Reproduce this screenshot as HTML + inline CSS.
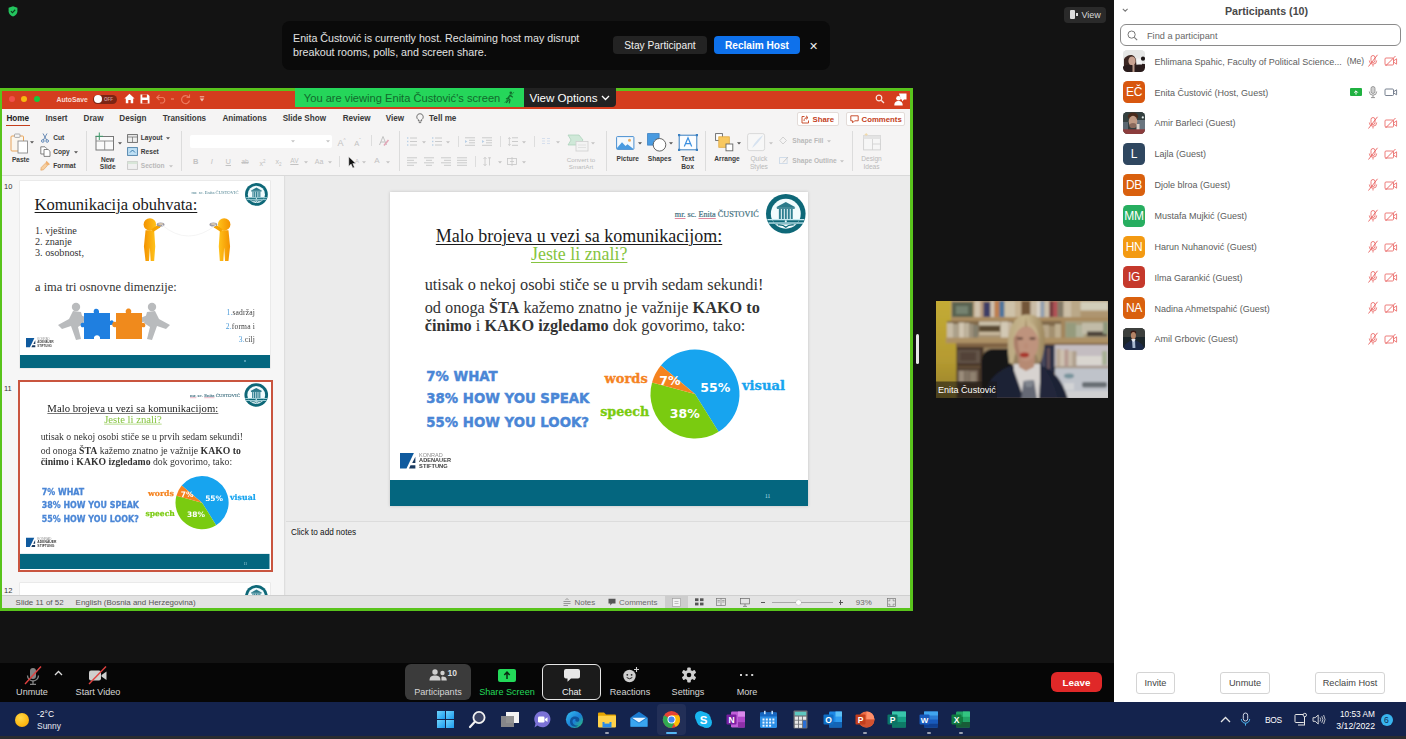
<!DOCTYPE html>
<html lang="bs">
<head>
<meta charset="utf-8">
<title>Zoom Meeting</title>
<style>
*{box-sizing:border-box;margin:0;padding:0}
html,body{width:1406px;height:739px;overflow:hidden;background:#121212;font-family:"Liberation Sans",sans-serif}
.a{position:absolute;white-space:nowrap}
#root{position:relative;width:1406px;height:739px;overflow:hidden;background:#131313}
svg{position:absolute;overflow:visible}
/* zoom chrome */
#ztool{left:0;top:663px;width:1114px;height:40px;background:#060606}
#taskbar{left:0;top:702px;width:1406px;height:34px;background:#14234d}
#under{left:0;top:736px;width:1406px;height:3px;background:#2a2c30}
#panel{left:1114px;top:0;width:292px;height:702px;background:#fff}
.zt{color:#d6d6d6;font-size:9.1px;top:686.2px;text-align:center;line-height:12px}
.tb{color:#fff;font-size:10px}
/* banner */
#banner{left:282px;top:21px;width:548px;height:49px;background:#0a0a0a;border-radius:8px}
/* panel */
.pn{font-size:9px;color:#5c5c5c;left:1154.6px}
.av{left:1123px;width:22px;height:22px;border-radius:4.5px;color:#fff;font-size:12px;text-align:center;line-height:22.5px;letter-spacing:-0.3px}
.pbtn{top:672.4px;height:22px;border:1px solid #d4d4d4;border-radius:3px;font-size:9.2px;color:#444;text-align:center;line-height:20px;background:#fff}

.tab{font-size:8.15px;font-weight:bold;line-height:11px}
.sq{text-decoration:underline;text-decoration-color:#e08aa0;text-decoration-thickness:0.8px;text-underline-offset:1px}
.sb{top:597.5px;font-size:7.95px;line-height:9px;color:#555}
</style>
</head>
<body>
<div id="root">
<!-- ============ ZOOM MAIN ============ -->
<!-- shield -->
<svg style="left:7.8px;top:6.2px" width="10" height="10.6" viewBox="0 0 12 13"><path d="M6 0.3 L11.4 2.2 V6.4 C11.4 9.6 9 11.8 6 12.8 C3 11.8 0.6 9.6 0.6 6.4 V2.2 Z" fill="#23c55e"/><path d="M3.4 6.4 L5.3 8.3 L8.7 4.6" fill="none" stroke="#0b3d1c" stroke-width="1.4"/></svg>
<!-- view button -->
<div class="a" style="left:1064px;top:7px;width:42px;height:16px;background:#2a2a2a;border-radius:4px"></div>
<div class="a" style="left:1070px;top:10px;width:5px;height:9px;background:#ddd;border-radius:1px"></div>
<div class="a" style="left:1076px;top:13px;width:2px;height:3px;background:#ddd"></div>
<div class="a" style="left:1081.5px;top:9px;font-size:9px;color:#d8d8d8;line-height:12px">View</div>
<!-- banner -->
<div id="banner" class="a"></div>
<div class="a" id="bt1" style="left:293px;top:31px;font-size:10.7px;line-height:14.4px;color:#e2e2e2;white-space:normal;width:320px">Enita Čustović is currently host. Reclaiming host may disrupt breakout rooms, polls, and screen share.</div>
<div class="a" style="left:613px;top:36px;width:94px;height:18px;background:#232323;border-radius:4px;color:#f0f0f0;font-size:10.2px;text-align:center;line-height:19.5px">Stay Participant</div>
<div class="a" style="left:714px;top:36px;width:86px;height:18px;background:#0e71eb;border-radius:4px;color:#fff;font-size:10.1px;font-weight:bold;text-align:center;line-height:19.5px">Reclaim Host</div>
<div class="a" style="left:808.5px;top:38.5px;font-size:10.5px;color:#eee;line-height:14px">✕</div>

<!-- toolbar -->
<div id="ztool" class="a"></div>
<!-- unmute -->
<svg style="left:22px;top:665px" width="22" height="22" viewBox="0 0 22 22"><rect x="8" y="3" width="6" height="11" rx="3" fill="#858585"/><path d="M5.5 10.5 A5.5 5.5 0 0 0 16.5 10.5" fill="none" stroke="#858585" stroke-width="1.3"/><path d="M11 16 V19 M8 19.3 H14" stroke="#858585" stroke-width="1.3"/><path d="M3 19 L19 1.5" stroke="#e0403f" stroke-width="1.4"/></svg>
<svg style="left:54px;top:670px" width="9" height="6" viewBox="0 0 9 6"><path d="M1 5 L4.5 1.5 L8 5" fill="none" stroke="#ddd" stroke-width="1.3"/></svg>
<div class="a zt" style="left:0;width:64px">Unmute</div>
<!-- start video -->
<svg style="left:86px;top:665px" width="24" height="22" viewBox="0 0 24 22"><rect x="3" y="5.5" width="12" height="10" rx="2" fill="#cfcfcf"/><path d="M15.5 10 L20.5 6.5 V15 L15.5 11.5 Z" fill="#cfcfcf"/><path d="M3 19 L20 1.5" stroke="#e0403f" stroke-width="1.4"/></svg>
<div class="a zt" style="left:66px;width:64px">Start Video</div>
<!-- participants -->
<div class="a" style="left:405px;top:664px;width:66px;height:36px;background:#3b3b3b;border-radius:6px"></div>
<svg style="left:428px;top:668px" width="32" height="16" viewBox="0 0 32 16"><circle cx="7" cy="4" r="2.7" fill="#cfcfcf"/><path d="M1.5 12.5 C1.5 8.5 4 7.6 7 7.6 C10 7.6 12.5 8.5 12.5 12.5 Z" fill="#cfcfcf"/><circle cx="14.5" cy="5" r="2.2" fill="#cfcfcf"/><path d="M13.5 12.5 C13.5 9.5 13 8.8 14.5 8.6 C17 8.6 18.8 9.6 18.8 12.5 Z" fill="#cfcfcf"/><text x="19.5" y="7.5" font-family="Liberation Sans, sans-serif" font-size="8.5" font-weight="bold" fill="#ddd">10</text></svg>
<div class="a zt" style="left:405px;width:66px">Participants</div>
<!-- share screen -->
<div class="a" style="left:498px;top:669px;width:18px;height:13px;background:#23d959;border-radius:2px"></div>
<svg style="left:502px;top:671px" width="10" height="9" viewBox="0 0 10 9"><path d="M5 8 V1.5 M2.3 4 L5 1.2 L7.7 4" fill="none" stroke="#0a2a12" stroke-width="1.5"/></svg>
<div class="a zt" style="left:474px;width:66px;color:#23d959">Share Screen</div>
<!-- chat -->
<div class="a" style="left:542px;top:664px;width:59px;height:36px;background:#1b1b1b;border:1px solid #e6e6e6;border-radius:6px"></div>
<svg style="left:563px;top:668px" width="18" height="16" viewBox="0 0 18 16"><path d="M3 1 H15 A2 2 0 0 1 17 3 V8.5 A2 2 0 0 1 15 10.5 H8 L4.5 13.8 V10.5 H3 A2 2 0 0 1 1 8.5 V3 A2 2 0 0 1 3 1 Z" fill="#e8e8e8"/></svg>
<div class="a zt" style="left:542px;width:59px;color:#f0f0f0">Chat</div>
<!-- reactions -->
<svg style="left:621px;top:666px" width="20" height="18" viewBox="0 0 20 18"><circle cx="8.5" cy="10" r="6.2" fill="#cfcfcf"/><circle cx="6.3" cy="8.8" r="0.9" fill="#222"/><circle cx="10.6" cy="8.8" r="0.9" fill="#222"/><path d="M5.7 11.5 Q8.5 14 11.3 11.5" fill="none" stroke="#222" stroke-width="1"/><path d="M15.5 1 V6 M13 3.5 H18" stroke="#cfcfcf" stroke-width="1.1"/></svg>
<div class="a zt" style="left:600px;width:60px">Reactions</div>
<!-- settings -->
<svg style="left:681px;top:667px" width="16" height="16" viewBox="0 0 16 16"><g fill="#cfcfcf"><circle cx="8" cy="8" r="5.2"/><g id="gt"><rect x="6.2" y="0.6" width="3.6" height="3.2" rx="1"/><rect x="6.2" y="12.2" width="3.6" height="3.2" rx="1"/></g><use href="#gt" transform="rotate(60 8 8)"/><use href="#gt" transform="rotate(120 8 8)"/></g><circle cx="8" cy="8" r="2.3" fill="#060606"/></svg>
<div class="a zt" style="left:658px;width:60px">Settings</div>
<!-- more -->
<div class="a" style="left:740px;top:674px;width:2.4px;height:2.4px;background:#cfcfcf;box-shadow:5.6px 0 #cfcfcf,11.2px 0 #cfcfcf"></div>
<div class="a zt" style="left:717px;width:60px">More</div>
<!-- leave -->
<div class="a" style="left:1051px;top:672px;width:51px;height:20px;background:#e02828;border-radius:6px;color:#fff;font-size:9.9px;font-weight:bold;text-align:center;line-height:21px">Leave</div>
<!-- ============ PANEL ============ -->
<div id="panel" class="a"></div>
<svg style="left:1122px;top:7.6px" width="6.4" height="4" viewBox="0 0 8 5"><path d="M1 1 L4 4 L7 1" fill="none" stroke="#777" stroke-width="1.3"/></svg>
<div class="a" style="left:1114px;top:4px;width:292px;text-align:center;padding-left:13px;font-size:10.7px;font-weight:bold;color:#484848;line-height:14px">Participants (10)</div>
<div class="a" style="left:1120px;top:24px;width:281px;height:22px;border:1px solid #8a8a8a;border-radius:6px;background:#fff"></div>
<svg style="left:1127px;top:30px" width="11" height="11" viewBox="0 0 11 11"><circle cx="4.6" cy="4.6" r="3.6" fill="none" stroke="#777" stroke-width="1"/><path d="M7.3 7.3 L10.2 10.2" stroke="#777" stroke-width="1.1"/></svg>
<div class="a" style="left:1147px;top:30px;font-size:9.2px;color:#666;line-height:12px">Find a participant</div>
<svg style="left:1123px;top:50.4px;border-radius:4.5px;overflow:hidden" width="22" height="22" viewBox="0 0 22 22"><defs><filter id="ab1"><feGaussianBlur stdDeviation="0.7"/></filter></defs><rect width="22" height="22" fill="#e6e6e5"/><g filter="url(#ab1)"><rect x="-2" y="-2" width="26" height="26" fill="#e6e7e6"/><path d="M1 24 L1 9 Q4 4.5 9 5 Q12 6 13 10 L14 24 Z" fill="#3a2620"/><ellipse cx="9" cy="11" rx="3.6" ry="4.6" fill="#c9a392"/><path d="M-1 24 V17 Q6 13 11 16 Q16 12.5 24 14.5 V24 Z" fill="#2a1c1e"/><rect x="9.5" y="15" width="2" height="8" fill="#b89888"/><rect x="14" y="8.5" width="5" height="6" fill="#f3f3f3"/><circle cx="20" cy="8.7" r="2.1" fill="#1c1518"/></g></svg>
<div class="a pn" id="pn0" style="top:55.6px;line-height:13px">Ehlimana Spahic, Faculty of Political Science...</div>
<div class="a pn" style="left:1346.7px;top:54.9px;line-height:13px;font-size:8.5px">(Me)</div>
<svg style="left:1367px;top:54.4px" width="12" height="14" viewBox="0 0 12 14"><rect x="4" y="1.5" width="4" height="7" rx="2" fill="none" stroke="#e85e5c" stroke-width="0.8"/><path d="M2.3 6.5 A3.7 3.7 0 0 0 9.7 6.5 M6 10.3 V12.5" fill="none" stroke="#e85e5c" stroke-width="0.8"/><path d="M1.5 12.5 L10.5 0.8" stroke="#e85e5c" stroke-width="0.9"/></svg>
<svg style="left:1384px;top:55.4px" width="14" height="12" viewBox="0 0 14 12"><rect x="1" y="3" width="8.5" height="7" rx="1" fill="none" stroke="#e85e5c" stroke-width="0.8"/><path d="M9.8 5.8 L12.6 3.8 V9.2 L9.8 7.2" fill="none" stroke="#e85e5c" stroke-width="0.8"/><path d="M1.5 11 L11.5 1" stroke="#e85e5c" stroke-width="0.9"/></svg>
<div class="a av" style="top:81.3px;background:#d8570f">EČ</div>
<div class="a pn" id="pn1" style="top:86.5px;line-height:13px">Enita Čustović (Host, Guest)</div>
<div class="a" style="left:1350px;top:88.3px;width:12px;height:8px;background:#1fb141;border-radius:1px"></div>
<svg style="left:1353px;top:89.8px" width="6" height="5" viewBox="0 0 6 5"><path d="M3 4.6 V1 M1.2 2.6 L3 0.8 L4.8 2.6" fill="none" stroke="#fff" stroke-width="1"/></svg>
<svg style="left:1367px;top:85.3px" width="12" height="14" viewBox="0 0 12 14"><rect x="4" y="1.5" width="4" height="7" rx="2" fill="#d0d0d0" stroke="#8a8a8a" stroke-width="0.8"/><path d="M2.3 6.5 A3.7 3.7 0 0 0 9.7 6.5 M6 10.3 V12.5 M4 12.6 H8" fill="none" stroke="#8a8a8a" stroke-width="0.9"/></svg>
<svg style="left:1384px;top:86.3px" width="14" height="12" viewBox="0 0 14 12"><rect x="1" y="3" width="8.5" height="6.5" rx="1" fill="none" stroke="#6a7485" stroke-width="0.9"/><path d="M9.8 5.6 L12.6 3.8 V8.8 L9.8 7" fill="none" stroke="#6a7485" stroke-width="0.9"/></svg>
<svg style="left:1123px;top:112.1px;border-radius:4.5px;overflow:hidden" width="22" height="22" viewBox="0 0 22 22"><defs><filter id="ab2"><feGaussianBlur stdDeviation="0.7"/></filter></defs><rect width="22" height="22" fill="#3a4646"/><g filter="url(#ab2)"><rect x="-2" y="-2" width="26" height="26" fill="#34403f"/><rect x="14" y="8" width="10" height="10" fill="#6a7680"/><rect x="-2" y="10" width="7" height="8" fill="#5a6670"/><ellipse cx="10" cy="4.5" rx="5.2" ry="4" fill="#4a2c1c"/><ellipse cx="10" cy="9.5" rx="4.3" ry="5.8" fill="#c09a84"/><ellipse cx="10" cy="13.5" rx="3.6" ry="2.6" fill="#8a6a5c"/><rect x="13.5" y="12" width="3" height="7" fill="#d8d0c8"/><rect x="-2" y="17.3" width="26" height="7" fill="#8c3c3e"/><circle cx="19.8" cy="5.4" r="1.1" fill="#e8f0f0"/></g></svg>
<div class="a pn" id="pn2" style="top:117.3px;line-height:13px">Amir Barleci (Guest)</div>
<svg style="left:1367px;top:116.1px" width="12" height="14" viewBox="0 0 12 14"><rect x="4" y="1.5" width="4" height="7" rx="2" fill="none" stroke="#e85e5c" stroke-width="0.8"/><path d="M2.3 6.5 A3.7 3.7 0 0 0 9.7 6.5 M6 10.3 V12.5" fill="none" stroke="#e85e5c" stroke-width="0.8"/><path d="M1.5 12.5 L10.5 0.8" stroke="#e85e5c" stroke-width="0.9"/></svg>
<svg style="left:1384px;top:117.1px" width="14" height="12" viewBox="0 0 14 12"><rect x="1" y="3" width="8.5" height="7" rx="1" fill="none" stroke="#e85e5c" stroke-width="0.8"/><path d="M9.8 5.8 L12.6 3.8 V9.2 L9.8 7.2" fill="none" stroke="#e85e5c" stroke-width="0.8"/><path d="M1.5 11 L11.5 1" stroke="#e85e5c" stroke-width="0.9"/></svg>
<div class="a av" style="top:143.0px;background:#2f4760">L</div>
<div class="a pn" id="pn3" style="top:148.2px;line-height:13px">Lajla (Guest)</div>
<svg style="left:1367px;top:147.0px" width="12" height="14" viewBox="0 0 12 14"><rect x="4" y="1.5" width="4" height="7" rx="2" fill="none" stroke="#e85e5c" stroke-width="0.8"/><path d="M2.3 6.5 A3.7 3.7 0 0 0 9.7 6.5 M6 10.3 V12.5" fill="none" stroke="#e85e5c" stroke-width="0.8"/><path d="M1.5 12.5 L10.5 0.8" stroke="#e85e5c" stroke-width="0.9"/></svg>
<svg style="left:1384px;top:148.0px" width="14" height="12" viewBox="0 0 14 12"><rect x="1" y="3" width="8.5" height="7" rx="1" fill="none" stroke="#e85e5c" stroke-width="0.8"/><path d="M9.8 5.8 L12.6 3.8 V9.2 L9.8 7.2" fill="none" stroke="#e85e5c" stroke-width="0.8"/><path d="M1.5 11 L11.5 1" stroke="#e85e5c" stroke-width="0.9"/></svg>
<div class="a av" style="top:173.8px;background:#d9600e">DB</div>
<div class="a pn" id="pn4" style="top:179.0px;line-height:13px">Djole blroa (Guest)</div>
<svg style="left:1367px;top:177.8px" width="12" height="14" viewBox="0 0 12 14"><rect x="4" y="1.5" width="4" height="7" rx="2" fill="none" stroke="#e85e5c" stroke-width="0.8"/><path d="M2.3 6.5 A3.7 3.7 0 0 0 9.7 6.5 M6 10.3 V12.5" fill="none" stroke="#e85e5c" stroke-width="0.8"/><path d="M1.5 12.5 L10.5 0.8" stroke="#e85e5c" stroke-width="0.9"/></svg>
<svg style="left:1384px;top:178.8px" width="14" height="12" viewBox="0 0 14 12"><rect x="1" y="3" width="8.5" height="7" rx="1" fill="none" stroke="#e85e5c" stroke-width="0.8"/><path d="M9.8 5.8 L12.6 3.8 V9.2 L9.8 7.2" fill="none" stroke="#e85e5c" stroke-width="0.8"/><path d="M1.5 11 L11.5 1" stroke="#e85e5c" stroke-width="0.9"/></svg>
<div class="a av" style="top:204.7px;background:#27ae60">MM</div>
<div class="a pn" id="pn5" style="top:209.9px;line-height:13px">Mustafa Mujkić (Guest)</div>
<svg style="left:1367px;top:208.7px" width="12" height="14" viewBox="0 0 12 14"><rect x="4" y="1.5" width="4" height="7" rx="2" fill="none" stroke="#e85e5c" stroke-width="0.8"/><path d="M2.3 6.5 A3.7 3.7 0 0 0 9.7 6.5 M6 10.3 V12.5" fill="none" stroke="#e85e5c" stroke-width="0.8"/><path d="M1.5 12.5 L10.5 0.8" stroke="#e85e5c" stroke-width="0.9"/></svg>
<svg style="left:1384px;top:209.7px" width="14" height="12" viewBox="0 0 14 12"><rect x="1" y="3" width="8.5" height="7" rx="1" fill="none" stroke="#e85e5c" stroke-width="0.8"/><path d="M9.8 5.8 L12.6 3.8 V9.2 L9.8 7.2" fill="none" stroke="#e85e5c" stroke-width="0.8"/><path d="M1.5 11 L11.5 1" stroke="#e85e5c" stroke-width="0.9"/></svg>
<div class="a av" style="top:235.6px;background:#f39a12">HN</div>
<div class="a pn" id="pn6" style="top:240.8px;line-height:13px">Harun Nuhanović (Guest)</div>
<svg style="left:1367px;top:239.6px" width="12" height="14" viewBox="0 0 12 14"><rect x="4" y="1.5" width="4" height="7" rx="2" fill="none" stroke="#e85e5c" stroke-width="0.8"/><path d="M2.3 6.5 A3.7 3.7 0 0 0 9.7 6.5 M6 10.3 V12.5" fill="none" stroke="#e85e5c" stroke-width="0.8"/><path d="M1.5 12.5 L10.5 0.8" stroke="#e85e5c" stroke-width="0.9"/></svg>
<svg style="left:1384px;top:240.6px" width="14" height="12" viewBox="0 0 14 12"><rect x="1" y="3" width="8.5" height="7" rx="1" fill="none" stroke="#e85e5c" stroke-width="0.8"/><path d="M9.8 5.8 L12.6 3.8 V9.2 L9.8 7.2" fill="none" stroke="#e85e5c" stroke-width="0.8"/><path d="M1.5 11 L11.5 1" stroke="#e85e5c" stroke-width="0.9"/></svg>
<div class="a av" style="top:266.4px;background:#c5392c">IG</div>
<div class="a pn" id="pn7" style="top:271.6px;line-height:13px">Ilma Garankić (Guest)</div>
<svg style="left:1367px;top:270.4px" width="12" height="14" viewBox="0 0 12 14"><rect x="4" y="1.5" width="4" height="7" rx="2" fill="none" stroke="#e85e5c" stroke-width="0.8"/><path d="M2.3 6.5 A3.7 3.7 0 0 0 9.7 6.5 M6 10.3 V12.5" fill="none" stroke="#e85e5c" stroke-width="0.8"/><path d="M1.5 12.5 L10.5 0.8" stroke="#e85e5c" stroke-width="0.9"/></svg>
<svg style="left:1384px;top:271.4px" width="14" height="12" viewBox="0 0 14 12"><rect x="1" y="3" width="8.5" height="7" rx="1" fill="none" stroke="#e85e5c" stroke-width="0.8"/><path d="M9.8 5.8 L12.6 3.8 V9.2 L9.8 7.2" fill="none" stroke="#e85e5c" stroke-width="0.8"/><path d="M1.5 11 L11.5 1" stroke="#e85e5c" stroke-width="0.9"/></svg>
<div class="a av" style="top:297.3px;background:#d9600e">NA</div>
<div class="a pn" id="pn8" style="top:302.5px;line-height:13px">Nadina Ahmetspahić (Guest)</div>
<svg style="left:1367px;top:301.3px" width="12" height="14" viewBox="0 0 12 14"><rect x="4" y="1.5" width="4" height="7" rx="2" fill="none" stroke="#e85e5c" stroke-width="0.8"/><path d="M2.3 6.5 A3.7 3.7 0 0 0 9.7 6.5 M6 10.3 V12.5" fill="none" stroke="#e85e5c" stroke-width="0.8"/><path d="M1.5 12.5 L10.5 0.8" stroke="#e85e5c" stroke-width="0.9"/></svg>
<svg style="left:1384px;top:302.3px" width="14" height="12" viewBox="0 0 14 12"><rect x="1" y="3" width="8.5" height="7" rx="1" fill="none" stroke="#e85e5c" stroke-width="0.8"/><path d="M9.8 5.8 L12.6 3.8 V9.2 L9.8 7.2" fill="none" stroke="#e85e5c" stroke-width="0.8"/><path d="M1.5 11 L11.5 1" stroke="#e85e5c" stroke-width="0.9"/></svg>
<svg style="left:1123px;top:328.1px;border-radius:4.5px;overflow:hidden" width="22" height="22" viewBox="0 0 22 22"><defs><filter id="ab3"><feGaussianBlur stdDeviation="0.7"/></filter></defs><rect width="22" height="22" fill="#2c3236"/><g filter="url(#ab3)"><rect x="-2" y="-2" width="26" height="12" fill="#3c3f3e"/><rect x="-2" y="9" width="26" height="15" fill="#1e252c"/><path d="M-1 24 Q2 13 10.5 12 Q19 13 23 24 Z" fill="#1c2c4a"/><ellipse cx="10.4" cy="4.6" rx="2.8" ry="2" fill="#3a1c12"/><ellipse cx="10.4" cy="7.6" rx="2.5" ry="3.6" fill="#b48466"/><path d="M9 11.5 H12 L12.4 20 H9.6 Z" fill="#a8b8d0"/><path d="M8.2 11.8 L10.4 14 L12.6 11.8 L12 11 H8.8 Z" fill="#e4e8f0"/></g></svg>
<div class="a pn" id="pn9" style="top:333.3px;line-height:13px">Amil Grbovic (Guest)</div>
<svg style="left:1367px;top:332.1px" width="12" height="14" viewBox="0 0 12 14"><rect x="4" y="1.5" width="4" height="7" rx="2" fill="none" stroke="#e85e5c" stroke-width="0.8"/><path d="M2.3 6.5 A3.7 3.7 0 0 0 9.7 6.5 M6 10.3 V12.5" fill="none" stroke="#e85e5c" stroke-width="0.8"/><path d="M1.5 12.5 L10.5 0.8" stroke="#e85e5c" stroke-width="0.9"/></svg>
<svg style="left:1384px;top:333.1px" width="14" height="12" viewBox="0 0 14 12"><rect x="1" y="3" width="8.5" height="7" rx="1" fill="none" stroke="#e85e5c" stroke-width="0.8"/><path d="M9.8 5.8 L12.6 3.8 V9.2 L9.8 7.2" fill="none" stroke="#e85e5c" stroke-width="0.8"/><path d="M1.5 11 L11.5 1" stroke="#e85e5c" stroke-width="0.9"/></svg>
<div class="a pbtn" style="left:1136px;width:39px">Invite</div>
<div class="a pbtn" style="left:1220px;width:50px">Unmute</div>
<div class="a pbtn" style="left:1315px;width:70px">Reclaim Host</div>
<!-- ============ SHARED SCREEN (PowerPoint) ============ -->
<svg width="0" height="0" style="left:0;top:0"><defs><filter id="fgb" x="-10%" y="-10%" width="120%" height="120%"><feGaussianBlur stdDeviation="0.45"/></filter></defs></svg>
<div class="a" style="left:0;top:88px;width:913px;height:522.5px;background:#59c41c"></div>
<div class="a" style="left:1.5px;top:91px;width:908.5px;height:517px;background:#e9e9e9;overflow:hidden"></div>
<div class="a" style="left:1.5px;top:91px;width:908.5px;height:18px;background:#d43d1e"></div>
<div class="a" style="left:8.5px;top:96px;width:6.4px;height:6.4px;border-radius:50%;background:#f14f4a"></div>
<div class="a" style="left:20.9px;top:96px;width:6.4px;height:6.4px;border-radius:50%;background:#f8b70f"></div>
<div class="a" style="left:33.5px;top:96px;width:6.4px;height:6.4px;border-radius:50%;background:#17c93c"></div>
<div class="a" style="left:56.5px;top:95px;font-size:6.8px;font-weight:bold;color:#f8d8d0;line-height:9px">AutoSave</div>
<div class="a" style="left:93px;top:94.5px;width:24px;height:9px;border-radius:4.5px;background:#7d2414"></div>
<div class="a" style="left:93.5px;top:95px;width:8px;height:8px;border-radius:50%;background:#fff"></div>
<div class="a" style="left:104px;top:96.5px;font-size:4.5px;color:#c99;line-height:5px;font-weight:bold">OFF</div>
<svg style="left:124px;top:93px" width="11" height="11" viewBox="0 0 11 11"><path d="M5.5 0.8 L10.6 5.6 H9.2 V10.2 H6.7 V7 H4.3 V10.2 H1.8 V5.6 H0.4 Z" fill="#fff"/></svg>
<svg style="left:140px;top:93.5px" width="10" height="10" viewBox="0 0 10 10"><path d="M0.5 0.5 H8 L9.5 2 V9.5 H0.5 Z" fill="#fff"/><rect x="2.3" y="0.5" width="4.6" height="3" fill="#d43d1e"/><rect x="2.3" y="6" width="5.4" height="3.5" fill="#d43d1e"/></svg>
<svg style="left:156px;top:94px" width="11" height="10" viewBox="0 0 11 10"><path d="M1 3.5 H7 A3 3 0 0 1 7 9 H4" fill="none" stroke="#ec7a5e" stroke-width="1.2"/><path d="M3.5 0.8 L0.8 3.5 L3.5 6.2" fill="none" stroke="#ec7a5e" stroke-width="1.2"/></svg>
<div class="a" style="left:171px;top:98px;width:3px;height:1.5px;background:#e0694c"></div>
<svg style="left:179.5px;top:93.5px" width="11" height="11" viewBox="0 0 11 11"><path d="M8.6 3 A4 4 0 1 0 9.5 6.5" fill="none" stroke="#ec7a5e" stroke-width="1.2"/><path d="M9.5 0.5 V3.5 H6.5" fill="none" stroke="#ec7a5e" stroke-width="1.1"/></svg>
<svg style="left:198.5px;top:96px" width="6" height="6" viewBox="0 0 6 6"><path d="M0.8 0.8 H5.2" stroke="#f3c0b2" stroke-width="1"/><path d="M0.8 2.6 H5.2 L3 5.4 Z" fill="#f3c0b2"/></svg>
<svg style="left:875px;top:94px" width="10" height="10" viewBox="0 0 10 10"><circle cx="4" cy="4" r="2.8" fill="none" stroke="#fbe3dc" stroke-width="1.2"/><path d="M6.2 6.2 L9 9" stroke="#fbe3dc" stroke-width="1.3"/></svg>
<svg style="left:894px;top:92.5px" width="13" height="13" viewBox="0 0 13 13"><path d="M5 0.5 H12.5 V6.5 H10 L8 8.5 V6.5 H7" fill="#fff"/><circle cx="4.5" cy="5.2" r="2.3" fill="#fff"/><path d="M0.3 12.5 C0.3 9 2.3 8 4.5 8 C6.7 8 8.7 9 8.7 12.5 Z" fill="#fff"/></svg>
<div class="a" style="left:295px;top:88px;width:229px;height:18.5px;background:#25d65a"></div>
<div class="a" id="yav" style="left:303.8px;top:90.5px;font-size:11.14px;line-height:14px;color:#116a2c">You are viewing Enita Čustović's screen</div>
<svg style="left:504px;top:91px" width="11" height="13" viewBox="0 0 11 13"><circle cx="6.8" cy="1.8" r="1.3" fill="#116a2c"/><path d="M6.5 3.5 L4 7 L6 9 L5.2 12.3 M4 7 L2 8 M6.2 4.5 L8.8 6.2 M4.5 8.8 L2.2 11.8" fill="none" stroke="#116a2c" stroke-width="1.2"/><path d="M0.5 12 L10 1" stroke="#116a2c" stroke-width="0.6"/></svg>
<div class="a" style="left:524px;top:88px;width:92px;height:18.5px;background:#222;border-radius:0 0 4px 0"></div>
<div class="a" id="vop" style="left:529.4px;top:90.5px;font-size:11.6px;line-height:14px;color:#fff">View Options</div>
<svg style="left:601px;top:95px" width="9" height="6" viewBox="0 0 9 6"><path d="M1 1 L4.5 4.5 L8 1" fill="none" stroke="#fff" stroke-width="1.3"/></svg>
<div class="a" style="left:1.5px;top:109px;width:908.5px;height:66.5px;background:#f5f4f4;border-bottom:1px solid #d9d9d9"></div>
<div class="a tab" id="tab0" style="left:6.4px;top:112.5px;color:#222">Home</div>
<div class="a tab" id="tab1" style="left:45.4px;top:112.5px;color:#3a3a3a">Insert</div>
<div class="a tab" id="tab2" style="left:83.6px;top:112.5px;color:#3a3a3a">Draw</div>
<div class="a tab" id="tab3" style="left:119.3px;top:112.5px;color:#3a3a3a">Design</div>
<div class="a tab" id="tab4" style="left:162.8px;top:112.5px;color:#3a3a3a">Transitions</div>
<div class="a tab" id="tab5" style="left:222.5px;top:112.5px;color:#3a3a3a">Animations</div>
<div class="a tab" id="tab6" style="left:282.7px;top:112.5px;color:#3a3a3a">Slide Show</div>
<div class="a tab" id="tab7" style="left:342.7px;top:112.5px;color:#3a3a3a">Review</div>
<div class="a tab" id="tab8" style="left:385.8px;top:112.5px;color:#3a3a3a">View</div>
<div class="a tab" id="tab9" style="left:429px;top:112.5px;color:#3a3a3a">Tell me</div>
<div class="a" style="left:6.4px;top:124.6px;width:23.6px;height:1.6px;background:#c43e1c"></div>
<svg style="left:415.5px;top:112.5px" width="8" height="11" viewBox="0 0 8 11"><path d="M4 0.7 A3.2 3.2 0 0 1 5.6 6.7 V8 H2.4 V6.7 A3.2 3.2 0 0 1 4 0.7 Z M2.8 9.6 H5.2" fill="none" stroke="#555" stroke-width="0.8"/></svg>
<div class="a" style="left:797px;top:112px;width:41.5px;height:14px;background:#fff;border:0.6px solid #e3dcd9;border-radius:2px"></div>
<svg style="left:801px;top:114.5px" width="9" height="9" viewBox="0 0 9 9"><path d="M3.5 1.5 H1 V8 H7.5 V5.5 M3 6 C3 3.5 4.5 2.6 6.5 2.6 M5 0.8 L7 2.6 L5 4.4" fill="none" stroke="#c43e1c" stroke-width="0.9"/></svg>
<div class="a tab" id="shr" style="left:812.5px;top:113.7px;color:#c43e1c;font-size:7.8px">Share</div>
<div class="a" style="left:846px;top:112px;width:58.5px;height:14px;background:#fff;border:0.6px solid #e3dcd9;border-radius:2px"></div>
<svg style="left:849.5px;top:115px" width="9" height="9" viewBox="0 0 9 9"><path d="M0.8 0.8 H8.2 V5.8 H4.6 L2.6 7.8 V5.8 H0.8 Z" fill="none" stroke="#c43e1c" stroke-width="0.9"/></svg>
<div class="a tab" id="cmt" style="left:861.5px;top:113.7px;color:#c43e1c;font-size:7.8px">Comments</div>
<svg style="left:9.6px;top:133px" width="19" height="21" viewBox="0 0 19 21"><rect x="1" y="3" width="12.5" height="15" rx="1" fill="#fbf6ee" stroke="#e8a45a" stroke-width="1"/><rect x="4.5" y="1" width="5.5" height="3.4" rx="0.8" fill="#f5f5f5" stroke="#999" stroke-width="0.8"/><rect x="8" y="8" width="9.5" height="12" fill="#fff" stroke="#8a8a8a" stroke-width="0.9"/></svg>
<svg style="left:30.4px;top:141.3px" width="4" height="3" viewBox="0 0 4 3"><path d="M0 0.3 L2 2.6 L4 0.3 Z" fill="#555"/></svg>
<div class="a" style="left:-9.3px;width:60px;text-align:center;top:155.6px;font-size:6.6px;line-height:8px;color:#3b3b3b;font-weight:bold">Paste</div>
<svg style="left:40.5px;top:133px" width="8" height="10" viewBox="0 0 8 10"><path d="M2 0.5 L5.6 7 M6 0.5 L2.4 7" stroke="#5a7fae" stroke-width="0.9"/><circle cx="1.8" cy="8" r="1.3" fill="none" stroke="#3d6ea8" stroke-width="0.8"/><circle cx="6.2" cy="8" r="1.3" fill="none" stroke="#3d6ea8" stroke-width="0.8"/></svg>
<div class="a" style="left:53.3px;top:133.8px;font-size:6.6px;line-height:8px;color:#3b3b3b;font-weight:bold">Cut</div>
<svg style="left:39.5px;top:146px" width="11" height="11" viewBox="0 0 11 11"><path d="M0.8 0.8 H5 L6.8 2.6 V8 H0.8 Z" fill="#fff" stroke="#666" stroke-width="0.8"/><path d="M4 3.5 H8.2 L10 5.3 V10.4 H4 Z" fill="#fff" stroke="#666" stroke-width="0.8"/></svg>
<div class="a" style="left:53.3px;top:147.7px;font-size:6.6px;line-height:8px;color:#3b3b3b;font-weight:bold">Copy</div>
<svg style="left:73.7px;top:150.7px" width="4" height="3" viewBox="0 0 4 3"><path d="M0 0.3 L2 2.6 L4 0.3 Z" fill="#555"/></svg>
<svg style="left:39.5px;top:160px" width="11" height="11" viewBox="0 0 11 11"><path d="M6.5 0.8 L10 4.3 L7.8 5.4 L5.4 3 Z" fill="#f0b070"/><path d="M5.2 3.4 L7.4 5.6 L3.5 9.8 L0.8 10.2 L1.2 7.5 Z" fill="#f7cfa0" stroke="#e09a50" stroke-width="0.6"/></svg>
<div class="a" style="left:53.3px;top:161.6px;font-size:6.6px;line-height:8px;color:#3b3b3b;font-weight:bold">Format</div>
<div class="a" style="left:86.4px;top:131px;width:1px;height:40px;background:#dcdcdc"></div>
<svg style="left:94px;top:131.5px" width="21" height="20" viewBox="0 0 21 20"><rect x="2" y="4.5" width="17.5" height="13.5" fill="#fafafa" stroke="#777" stroke-width="1"/><path d="M2 9 H19.5 M10.7 9 V18" stroke="#8a8a8a" stroke-width="0.9"/><path d="M5.3 0.5 V8 M1.5 4.3 H9" stroke="#3d9a6a" stroke-width="1"/></svg>
<svg style="left:118.0px;top:141.8px" width="4" height="3" viewBox="0 0 4 3"><path d="M0 0.3 L2 2.6 L4 0.3 Z" fill="#555"/></svg>
<div class="a" style="left:77.7px;width:60px;text-align:center;top:155.6px;font-size:6.6px;line-height:8px;color:#3b3b3b;font-weight:bold">New</div>
<div class="a" style="left:77.7px;width:60px;text-align:center;top:163.0px;font-size:6.6px;line-height:8px;color:#3b3b3b;font-weight:bold">Slide</div>
<svg style="left:126.5px;top:133.5px" width="11" height="9" viewBox="0 0 11 9"><rect x="0.6" y="0.6" width="9.8" height="7.8" fill="#eee" stroke="#666" stroke-width="0.9"/><path d="M0.6 3 H10.4 M5.5 3 V8.4" stroke="#777" stroke-width="0.8"/></svg>
<div class="a" style="left:140.8px;top:133.8px;font-size:6.6px;line-height:8px;color:#3b3b3b;font-weight:bold">Layout</div>
<svg style="left:166.0px;top:136.8px" width="4" height="3" viewBox="0 0 4 3"><path d="M0 0.3 L2 2.6 L4 0.3 Z" fill="#555"/></svg>
<svg style="left:126.5px;top:147px" width="11" height="9" viewBox="0 0 11 9"><rect x="0.6" y="0.6" width="9.8" height="7.8" fill="#bfe0f5" stroke="#4a7fa8" stroke-width="0.9"/><path d="M3 5.5 L5.5 3 L8 5.5" fill="none" stroke="#2d6fa0" stroke-width="0.9"/></svg>
<div class="a" style="left:140.8px;top:147.7px;font-size:6.6px;line-height:8px;color:#3b3b3b;font-weight:bold">Reset</div>
<svg style="left:126.5px;top:161px" width="11" height="9" viewBox="0 0 11 9"><rect x="0.6" y="0.6" width="9.8" height="7.8" fill="#f0f0f0" stroke="#c6c6c6" stroke-width="0.9"/><rect x="0.6" y="0.6" width="9.8" height="2.4" fill="#d8e6d8"/></svg>
<div class="a" style="left:140.8px;top:161.6px;font-size:6.6px;line-height:8px;color:#b9b9b9;font-weight:bold">Section</div>
<svg style="left:168.7px;top:164.6px" width="4" height="3" viewBox="0 0 4 3"><path d="M0 0.3 L2 2.6 L4 0.3 Z" fill="#c4c4c4"/></svg>
<div class="a" style="left:181.4px;top:131px;width:1px;height:40px;background:#dcdcdc"></div>
<div class="a" style="left:189.5px;top:135px;width:142.5px;height:13px;background:#fff;border-radius:2px"></div>
<svg style="left:290.7px;top:140.4px" width="4" height="3" viewBox="0 0 4 3"><path d="M0 0.3 L2 2.6 L4 0.3 Z" fill="#c4c4c4"/></svg>
<svg style="left:325.7px;top:140.4px" width="4" height="3" viewBox="0 0 4 3"><path d="M0 0.3 L2 2.6 L4 0.3 Z" fill="#c4c4c4"/></svg>
<div class="a" style="left:185.6px;width:20px;text-align:center;top:156.7px;font-size:7.5px;line-height:10px;color:#c2c2c2;font-weight:bold">B</div>
<div class="a" style="left:201.9px;width:20px;text-align:center;top:156.7px;font-size:7.5px;line-height:10px;color:#c2c2c2;font-style:italic">I</div>
<div class="a" style="left:218.3px;width:20px;text-align:center;top:156.7px;font-size:7.5px;line-height:10px;color:#c2c2c2;text-decoration:underline">U</div>
<div class="a" style="left:235.0px;width:20px;text-align:center;top:156.7px;font-size:6.5px;line-height:10px;color:#c2c2c2;text-decoration:line-through">ab</div>
<div class="a" style="left:252.4px;width:20px;text-align:center;top:156.7px;font-size:7px;line-height:10px;color:#c2c2c2;">x<sup style="font-size:4.5px">2</sup></div>
<div class="a" style="left:268.4px;width:20px;text-align:center;top:156.7px;font-size:7px;line-height:10px;color:#c2c2c2;">x<sub style="font-size:4.5px">2</sub></div>
<div class="a" style="left:284.4px;width:20px;text-align:center;top:156.2px;font-size:6.5px;line-height:10px;color:#c2c2c2;text-decoration:underline">AV</div>
<svg style="left:304.3px;top:160.8px" width="4" height="3" viewBox="0 0 4 3"><path d="M0 0.3 L2 2.6 L4 0.3 Z" fill="#c4c4c4"/></svg>
<div class="a" style="left:309.0px;width:20px;text-align:center;top:156.7px;font-size:7px;line-height:10px;color:#c2c2c2;">Aa</div>
<svg style="left:328.0px;top:160.8px" width="4" height="3" viewBox="0 0 4 3"><path d="M0 0.3 L2 2.6 L4 0.3 Z" fill="#c4c4c4"/></svg>
<div class="a" style="left:331.6px;width:20px;text-align:center;top:136.0px;font-size:9px;line-height:10px;color:#c2c2c2;">A<sup style="font-size:4.5px">^</sup></div>
<div class="a" style="left:347.6px;width:20px;text-align:center;top:136.0px;font-size:7.5px;line-height:10px;color:#c2c2c2;">A<sup style="font-size:4.5px">ˇ</sup></div>
<div class="a" style="left:371px;top:135px;width:1px;height:11px;background:#ddd"></div>
<svg style="left:378px;top:135px" width="12" height="12" viewBox="0 0 12 12"><path d="M1.5 10 L5 1.5 L8.5 10 M3 7 H7" fill="none" stroke="#c2c2c2" stroke-width="1"/><path d="M6 10.5 L10.5 5" stroke="#e3a7b8" stroke-width="1.6"/></svg>
<div class="a" style="left:339px;top:156px;width:1px;height:11px;background:#ddd"></div>
<svg style="left:347.5px;top:155.5px" width="9" height="13" viewBox="0 0 9 13"><path d="M0.8 0.8 V10.2 L3.1 8.1 L4.8 12 L6.4 11.3 L4.8 7.5 H7.8 Z" fill="#111" stroke="#eee" stroke-width="0.5"/></svg>
<div class="a" style="left:347.0px;width:20px;text-align:center;top:155.5px;font-size:7.5px;line-height:10px;color:#c2c2c2;"><span style="font-size:6px">A</span></div>
<svg style="left:361.5px;top:160.8px" width="4" height="3" viewBox="0 0 4 3"><path d="M0 0.3 L2 2.6 L4 0.3 Z" fill="#c4c4c4"/></svg>
<div class="a" style="left:366.8px;width:20px;text-align:center;top:155.8px;font-size:8px;line-height:10px;color:#c2c2c2;">A</div>
<svg style="left:386.0px;top:160.8px" width="4" height="3" viewBox="0 0 4 3"><path d="M0 0.3 L2 2.6 L4 0.3 Z" fill="#c4c4c4"/></svg>
<div class="a" style="left:398.6px;top:131px;width:1px;height:40px;background:#dcdcdc"></div>
<svg style="left:407.0px;top:137.0px" width="10" height="9" viewBox="0 0 10 9"><rect x="0" y="0.30000000000000004" width="1.4" height="1.4" fill="#b8cfe6"/><path d="M3 1 H10" stroke="#c6c6c6" stroke-width="0.9"/><rect x="0" y="3.8" width="1.4" height="1.4" fill="#b8cfe6"/><path d="M3 4.5 H10" stroke="#c6c6c6" stroke-width="0.9"/><rect x="0" y="7.3" width="1.4" height="1.4" fill="#b8cfe6"/><path d="M3 8 H10" stroke="#c6c6c6" stroke-width="0.9"/></svg>
<svg style="left:421.7px;top:140.6px" width="4" height="3" viewBox="0 0 4 3"><path d="M0 0.3 L2 2.6 L4 0.3 Z" fill="#c4c4c4"/></svg>
<svg style="left:431.5px;top:137.0px" width="10" height="9" viewBox="0 0 10 9"><rect x="0" y="0.30000000000000004" width="1.4" height="1.4" fill="#b8cfe6"/><path d="M3 1 H10" stroke="#c6c6c6" stroke-width="0.9"/><rect x="0" y="3.8" width="1.4" height="1.4" fill="#b8cfe6"/><path d="M3 4.5 H10" stroke="#c6c6c6" stroke-width="0.9"/><rect x="0" y="7.3" width="1.4" height="1.4" fill="#b8cfe6"/><path d="M3 8 H10" stroke="#c6c6c6" stroke-width="0.9"/></svg>
<svg style="left:445.9px;top:140.6px" width="4" height="3" viewBox="0 0 4 3"><path d="M0 0.3 L2 2.6 L4 0.3 Z" fill="#c4c4c4"/></svg>
<div class="a" style="left:457.5px;top:136px;width:1px;height:11px;background:#ddd"></div>
<svg style="left:465.0px;top:137.0px" width="10" height="9" viewBox="0 0 10 9"><path d="M0 0.8 H10 M4 3.3 H10 M4 5.8 H10 M0 8.3 H10" stroke="#c6c6c6" stroke-width="0.9"/><path d="M0 3 L2.4 4.5 L0 6 Z" fill="#b8cfe6"/></svg>
<svg style="left:481.7px;top:137.0px" width="10" height="9" viewBox="0 0 10 9"><path d="M0 0.8 H10 M4 3.3 H10 M4 5.8 H10 M0 8.3 H10" stroke="#c6c6c6" stroke-width="0.9"/><path d="M0 3 L2.4 4.5 L0 6 Z" fill="#b8cfe6"/></svg>
<div class="a" style="left:499.5px;top:136px;width:1px;height:11px;background:#ddd"></div>
<svg style="left:508.4px;top:137.0px" width="10" height="9" viewBox="0 0 10 9"><path d="M4 0.8 H10 M4 4.5 H10 M4 8.3 H10" stroke="#c6c6c6" stroke-width="0.9"/><path d="M1.4 0.5 V8.5 M0.2 2 L1.4 0.5 L2.6 2 M0.2 7 L1.4 8.5 L2.6 7" fill="none" stroke="#c6c6c6" stroke-width="0.7"/></svg>
<svg style="left:522.0px;top:140.6px" width="4" height="3" viewBox="0 0 4 3"><path d="M0 0.3 L2 2.6 L4 0.3 Z" fill="#c4c4c4"/></svg>
<div class="a" style="left:533.6px;top:136px;width:1px;height:11px;background:#ddd"></div>
<svg style="left:541.4px;top:137.0px" width="10" height="9" viewBox="0 0 10 9"><path d="M1 1.5 H4 M1 4 H4 M1 6.5 H4 M6 1.5 H9 M6 4 H9 M6 6.5 H9" stroke="#d3dcec" stroke-width="0.9"/></svg>
<svg style="left:555.7px;top:140.6px" width="4" height="3" viewBox="0 0 4 3"><path d="M0 0.3 L2 2.6 L4 0.3 Z" fill="#c4c4c4"/></svg>
<svg style="left:407.0px;top:157.2px" width="10" height="9" viewBox="0 0 10 9"><path d="M0 0.8 H10" stroke="#c6c6c6" stroke-width="0.9"/><path d="M0 3.3 H7" stroke="#c6c6c6" stroke-width="0.9"/><path d="M0 5.8 H10" stroke="#c6c6c6" stroke-width="0.9"/><path d="M0 8.3 H7" stroke="#c6c6c6" stroke-width="0.9"/></svg>
<svg style="left:423.7px;top:157.2px" width="10" height="9" viewBox="0 0 10 9"><path d="M0.0 0.8 H10.0" stroke="#c6c6c6" stroke-width="0.9"/><path d="M2.0 3.3 H8.0" stroke="#c6c6c6" stroke-width="0.9"/><path d="M0.0 5.8 H10.0" stroke="#c6c6c6" stroke-width="0.9"/><path d="M2.0 8.3 H8.0" stroke="#c6c6c6" stroke-width="0.9"/></svg>
<svg style="left:440.7px;top:157.2px" width="10" height="9" viewBox="0 0 10 9"><path d="M0 0.8 H10" stroke="#c6c6c6" stroke-width="0.9"/><path d="M3 3.3 H10" stroke="#c6c6c6" stroke-width="0.9"/><path d="M0 5.8 H10" stroke="#c6c6c6" stroke-width="0.9"/><path d="M3 8.3 H10" stroke="#c6c6c6" stroke-width="0.9"/></svg>
<svg style="left:457.0px;top:157.2px" width="10" height="9" viewBox="0 0 10 9"><path d="M0 0.8 H10" stroke="#c6c6c6" stroke-width="0.9"/><path d="M0 3.3 H10" stroke="#c6c6c6" stroke-width="0.9"/><path d="M0 5.8 H10" stroke="#c6c6c6" stroke-width="0.9"/><path d="M0 8.3 H10" stroke="#c6c6c6" stroke-width="0.9"/></svg>
<div class="a" style="left:475.4px;top:156px;width:1px;height:11px;background:#ddd"></div>
<svg style="left:482.8px;top:157.2px" width="10" height="9" viewBox="0 0 10 9"><path d="M2 0.3 V8.7 M0.5 2 L2 0.3 L3.5 2 M0.5 7 L2 8.7 L3.5 7 M6.5 0.5 V8.5 M5 0.8 H8" fill="none" stroke="#c6c6c6" stroke-width="0.8"/></svg>
<svg style="left:497.5px;top:160.8px" width="4" height="3" viewBox="0 0 4 3"><path d="M0 0.3 L2 2.6 L4 0.3 Z" fill="#c4c4c4"/></svg>
<svg style="left:506.9px;top:157.2px" width="10" height="9" viewBox="0 0 10 9"><rect x="0.5" y="1.5" width="9" height="6" fill="none" stroke="#c6c6c6" stroke-width="0.8"/><path d="M5 0 V9 M3 4.5 H7" stroke="#c6c6c6" stroke-width="0.8"/></svg>
<svg style="left:521.6px;top:160.8px" width="4" height="3" viewBox="0 0 4 3"><path d="M0 0.3 L2 2.6 L4 0.3 Z" fill="#c4c4c4"/></svg>
<svg style="left:567px;top:133.5px" width="22" height="18" viewBox="0 0 22 18"><path d="M1 1 H12 L16 6 L12 11 H1 L4 6 Z" fill="#cfe8d8" stroke="#a8d0b8" stroke-width="0.7"/><rect x="9" y="7.5" width="12" height="9.5" fill="#f3f3f3" stroke="#cfcfcf" stroke-width="0.8"/><path d="M11 11 H19 M11 13.5 H19" stroke="#dcdcdc" stroke-width="0.8"/></svg>
<svg style="left:590.7px;top:141.8px" width="4" height="3" viewBox="0 0 4 3"><path d="M0 0.3 L2 2.6 L4 0.3 Z" fill="#c4c4c4"/></svg>
<div class="a" style="left:551.0px;width:60px;text-align:center;top:155.6px;font-size:6.2px;line-height:8px;color:#b9b9b9;font-weight:normal">Convert to</div>
<div class="a" style="left:551.0px;width:60px;text-align:center;top:163.0px;font-size:6.2px;line-height:8px;color:#b9b9b9;font-weight:normal">SmartArt</div>
<div class="a" style="left:606.4px;top:131px;width:1px;height:40px;background:#dcdcdc"></div>
<svg style="left:615.5px;top:135.5px" width="18.5" height="14" viewBox="0 0 18.5 14"><rect x="0.6" y="0.6" width="17.3" height="12.8" rx="0.8" fill="#f4f9fd" stroke="#4a8fd0" stroke-width="1"/><path d="M1 12 L6 6.2 L9.5 10 L11.5 8.2 L17.5 13 H1 Z" fill="#4a9be0"/><circle cx="13.5" cy="4.2" r="1.5" fill="#f0b060"/></svg>
<svg style="left:637.8px;top:141.6px" width="4" height="3" viewBox="0 0 4 3"><path d="M0 0.3 L2 2.6 L4 0.3 Z" fill="#555"/></svg>
<div class="a" style="left:597.8px;width:60px;text-align:center;top:155.3px;font-size:6.6px;line-height:8px;color:#3b3b3b;font-weight:bold">Picture</div>
<svg style="left:647px;top:132.5px" width="20" height="19" viewBox="0 0 20 19"><rect x="0.6" y="0.6" width="11.5" height="11.5" fill="#4a9be0" stroke="#3a7fc0" stroke-width="0.8"/><circle cx="12.5" cy="11.8" r="6.3" fill="#fff" stroke="#555" stroke-width="0.9"/></svg>
<svg style="left:669.0px;top:141.6px" width="4" height="3" viewBox="0 0 4 3"><path d="M0 0.3 L2 2.6 L4 0.3 Z" fill="#555"/></svg>
<div class="a" style="left:629.6px;width:60px;text-align:center;top:155.3px;font-size:6.6px;line-height:8px;color:#3b3b3b;font-weight:bold">Shapes</div>
<svg style="left:678px;top:133.5px" width="20" height="17" viewBox="0 0 20 17"><rect x="1.2" y="1.2" width="17.6" height="14.6" fill="#fbfdff" stroke="#3a7fc0" stroke-width="1"/><path d="M6.3 12.6 L10 3.8 L13.7 12.6 M7.8 9.6 H12.2" fill="none" stroke="#3a8fe0" stroke-width="1.2"/><g fill="#3a7fc0"><rect x="0" y="0" width="2.2" height="2.2"/><rect x="17.8" y="0" width="2.2" height="2.2"/><rect x="0" y="14.8" width="2.2" height="2.2"/><rect x="17.8" y="14.8" width="2.2" height="2.2"/></g></svg>
<div class="a" style="left:657.6px;width:60px;text-align:center;top:155.3px;font-size:6.6px;line-height:8px;color:#3b3b3b;font-weight:bold">Text</div>
<div class="a" style="left:657.6px;width:60px;text-align:center;top:162.8px;font-size:6.6px;line-height:8px;color:#3b3b3b;font-weight:bold">Box</div>
<div class="a" style="left:705.0px;top:131px;width:1px;height:40px;background:#dcdcdc"></div>
<svg style="left:715px;top:133px" width="18.5" height="18.5" viewBox="0 0 18.5 18.5"><rect x="0.6" y="0.6" width="6.8" height="6.8" fill="#fff" stroke="#666" stroke-width="0.9"/><rect x="3.8" y="3.8" width="10.5" height="10.5" fill="#f8c860" stroke="#e0a840" stroke-width="0.8"/><rect x="11" y="11" width="6.8" height="6.8" fill="#fff" stroke="#666" stroke-width="0.9"/></svg>
<svg style="left:736.8px;top:141.6px" width="4" height="3" viewBox="0 0 4 3"><path d="M0 0.3 L2 2.6 L4 0.3 Z" fill="#555"/></svg>
<div class="a" style="left:697.0px;width:60px;text-align:center;top:155.3px;font-size:6.6px;line-height:8px;color:#3b3b3b;font-weight:bold">Arrange</div>
<svg style="left:746.8px;top:133px" width="18.5" height="18.5" viewBox="0 0 18.5 18.5"><rect x="0.6" y="0.6" width="17" height="17" rx="2" fill="#f7f7f7" stroke="#d0d0d0" stroke-width="0.8"/><path d="M5 15 C7 14 14 7 16 2 C12 5 7 10 5 15 Z" fill="#d6e2f0"/></svg>
<svg style="left:768.7px;top:141.6px" width="4" height="3" viewBox="0 0 4 3"><path d="M0 0.3 L2 2.6 L4 0.3 Z" fill="#c4c4c4"/></svg>
<div class="a" style="left:728.9px;width:60px;text-align:center;top:155.3px;font-size:6.6px;line-height:8px;color:#b9b9b9;font-weight:normal">Quick</div>
<div class="a" style="left:728.9px;width:60px;text-align:center;top:162.8px;font-size:6.6px;line-height:8px;color:#b9b9b9;font-weight:normal">Styles</div>
<svg style="left:779px;top:136px" width="9" height="9" viewBox="0 0 9 9"><path d="M4 1 L7.5 4.5 L4 8 L0.8 4.6 Z" fill="none" stroke="#c8c8c8" stroke-width="0.8"/></svg>
<div class="a" style="left:792.3px;top:137.3px;font-size:6.6px;line-height:8px;color:#b9b9b9;font-weight:bold">Shape Fill</div>
<svg style="left:826.7px;top:140.4px" width="4" height="3" viewBox="0 0 4 3"><path d="M0 0.3 L2 2.6 L4 0.3 Z" fill="#c4c4c4"/></svg>
<svg style="left:778.5px;top:156px" width="10" height="9" viewBox="0 0 10 9"><rect x="0.6" y="1.6" width="7.5" height="6" fill="none" stroke="#c8d6e6" stroke-width="0.8"/><path d="M4 6.5 L9 1" stroke="#c8c8c8" stroke-width="1"/></svg>
<div class="a" style="left:792.3px;top:157.0px;font-size:6.6px;line-height:8px;color:#b9b9b9;font-weight:bold">Shape Outline</div>
<svg style="left:840.4px;top:160.1px" width="4" height="3" viewBox="0 0 4 3"><path d="M0 0.3 L2 2.6 L4 0.3 Z" fill="#c4c4c4"/></svg>
<div class="a" style="left:852.2px;top:131px;width:1px;height:40px;background:#dcdcdc"></div>
<svg style="left:862.9px;top:132.5px" width="18" height="17.5" viewBox="0 0 18 17.5"><rect x="0.6" y="2.6" width="16.8" height="14.3" fill="#f6f6f6" stroke="#cfcfcf" stroke-width="0.9"/><rect x="0.6" y="2.6" width="16.8" height="3.4" fill="#e3e3e3"/><path d="M9.5 6 V16.9 M9.5 11 H17.4" stroke="#cfcfcf" stroke-width="0.8"/><path d="M3.2 0 V3 M1.7 1.5 H4.7" stroke="#f0d9a8" stroke-width="0.9"/></svg>
<div class="a" style="left:841.5px;width:60px;text-align:center;top:155.3px;font-size:6.6px;line-height:8px;color:#b9b9b9;font-weight:normal">Design</div>
<div class="a" style="left:841.5px;width:60px;text-align:center;top:162.8px;font-size:6.6px;line-height:8px;color:#b9b9b9;font-weight:normal">Ideas</div>
<div class="a" style="left:2px;top:176px;width:283px;height:419px;background:#f6f6f6;border-right:1px solid #dedede;overflow:hidden" id="thumbs">
<div class="a" style="left:2px;top:6px;font-size:7.5px;line-height:9px;color:#333">10</div>
<div class="a" style="left:2px;top:208px;font-size:7.5px;line-height:9px;color:#333">11</div>
<div class="a" style="left:2px;top:409.5px;font-size:7.5px;line-height:9px;color:#333">12</div>
<div class="a" style="left:18px;top:5px;width:249.5px;height:187px;background:#fff;box-shadow:0 0 0 0.6px #e2e2e2;overflow:hidden">
<div class="a" style="left:0;top:173.5px;width:249.5px;height:13.5px;background:#04667f"></div>
<div class="a" style="left:14.6px;top:13.5px;font-family:'Liberation Serif',serif;font-size:16.5px;line-height:19px;color:#1a1a1a;text-decoration:underline;text-decoration-thickness:1.1px;text-underline-offset:1.6px">Komunikacija obuhvata:</div>
<div class="a" style="left:15px;top:43.5px;font-family:'Liberation Serif',serif;font-size:10.2px;line-height:11.2px;color:#333;white-space:pre-line">1. vještine
2. znanje
3. osobnost,</div>
<div class="a" style="left:15px;top:99px;font-family:'Liberation Serif',serif;font-size:12.45px;line-height:14px;color:#333">a ima tri osnovne dimenzije:</div>
<div class="a" style="left:171.5px;top:8.5px;font-family:'Liberation Serif',serif;font-size:4.6px;line-height:6px;color:#4a7f8e;filter:blur(0.3px)">mr. sc. Enita ČUSTOVIĆ</div>
<svg style="left:225.2px;top:2.3px" width="22.8" height="22.8" viewBox="-20 -20 40 40"><circle r="20" fill="#0e6878"/><circle r="15.1" fill="#f1fbfd"/><path d="M-9.8 -6.6 L0 -12 L9.8 -6.6 Z" fill="#2b7a8a"/><rect x="-9" y="-6.7" width="18" height="1.7" fill="#2b7a8a"/><g fill="#2f7f90"><rect x="-7" y="-5" width="2" height="10.4"/><rect x="-4" y="-5" width="2" height="10.4"/><rect x="-1" y="-5" width="2" height="10.4"/><rect x="2" y="-5" width="2" height="10.4"/><rect x="5" y="-5" width="2" height="10.4"/></g><path d="M-14.2 5.2 H14.2 L11 10.6 H-11 Z" fill="#0e6878"/><rect x="-18.6" y="5.3" width="37.2" height="1.25" fill="#cdeff5"/><rect x="-17.4" y="8.7" width="34.8" height="1.25" fill="#cdeff5"/><path d="M-8 11.2 Q-3 10.6 0 13.6 Q3 10.6 8 11.2" fill="none" stroke="#0e6878" stroke-width="1.2"/><circle cx="0" cy="7.6" r="1.1" fill="#e4f6fa"/></svg>
<div class="a" style="left:175px;top:126.8px;font-family:'Liberation Serif',serif;font-size:7.6px;line-height:9px;color:#444;text-align:right;width:60px;letter-spacing:0.15px;filter:blur(0.3px)"><span style="color:#4a9ad8">1.</span>sadržaj</div>
<div class="a" style="left:175px;top:140.6px;font-family:'Liberation Serif',serif;font-size:7.6px;line-height:9px;color:#444;text-align:right;width:60px;letter-spacing:0.15px;filter:blur(0.3px)"><span style="color:#4a9ad8">2.</span>forma i</div>
<div class="a" style="left:175px;top:154.4px;font-family:'Liberation Serif',serif;font-size:7.6px;line-height:9px;color:#444;text-align:right;width:60px;letter-spacing:0.15px;filter:blur(0.3px)"><span style="color:#4a9ad8">3.</span>cilj</div>
<svg style="left:118px;top:35.5px;filter:blur(0.45px)" width="28" height="46" viewBox="0 0 26 42" transform="scale(-1,1)"><defs><linearGradient id="og1" x1="0" y1="0" x2="1" y2="0"><stop offset="0" stop-color="#ffc21a"/><stop offset="1" stop-color="#f39200"/></linearGradient></defs><circle cx="15" cy="6.5" r="5.8" fill="url(#og1)"/><path d="M11 12 H19 L20.5 27 L19 40.5 H15.8 L15 28 L14.2 40.5 H11 L10 27 Z" fill="url(#og1)"/><path d="M12 13.5 L5.5 9.5 L4 7 L6.5 6.2 L13.5 11 Z" fill="#f7a400"/><ellipse cx="5" cy="6.6" rx="3.6" ry="1.9" fill="#9a9aa6"/><ellipse cx="5" cy="6.2" rx="2.4" ry="1" fill="#d6c6b0"/></svg>
<svg style="left:188px;top:35.5px;filter:blur(0.45px)" width="28" height="46" viewBox="0 0 26 42" ><defs><linearGradient id="og2" x1="0" y1="0" x2="1" y2="0"><stop offset="0" stop-color="#ffc21a"/><stop offset="1" stop-color="#f39200"/></linearGradient></defs><circle cx="15" cy="6.5" r="5.8" fill="url(#og2)"/><path d="M11 12 H19 L20.5 27 L19 40.5 H15.8 L15 28 L14.2 40.5 H11 L10 27 Z" fill="url(#og2)"/><path d="M12 13.5 L5.5 9.5 L4 7 L6.5 6.2 L13.5 11 Z" fill="#f7a400"/><ellipse cx="5" cy="6.6" rx="3.6" ry="1.9" fill="#9a9aa6"/><ellipse cx="5" cy="6.2" rx="2.4" ry="1" fill="#d6c6b0"/></svg>
<svg style="left:140px;top:40px" width="60" height="20" viewBox="0 0 60 20"><path d="M2 4 Q28 26 56 4" fill="none" stroke="#f3f3f3" stroke-width="0.9"/></svg>
<svg style="left:34px;top:118px;filter:blur(0.4px)" width="120" height="50" viewBox="0 0 120 50"><g fill="#b9bbbd"><circle cx="22" cy="8" r="4.2"/><path d="M19 12 L27 13 L30 24 L24 28 L27 40 L22 41 L17 27 L8 30 L4 26 L15 20 Z"/><path d="M24 15 L36 20 L35 24 L23 21 Z"/><circle cx="98" cy="8" r="4.2"/><path d="M101 12 L93 13 L90 24 L96 28 L93 40 L98 41 L103 27 L112 30 L116 26 L105 20 Z"/><path d="M96 15 L84 20 L85 24 L97 21 Z"/></g><path d="M30 14 H40 C38 9 46 8 45 14 H56 V22 C60 19 62 27 56 26 V40 H46 C47 35 39 35 40 40 H30 V28 C26 30 25 22 30 24 Z" fill="#1f7fe0"/><path d="M62 14 H72 C70 8 79 8 77 14 H88 V24 C92 22 93 30 88 28 V40 H62 V28 C57 30 57 21 62 23 Z" fill="#f08a1c"/></svg>
<svg style="left:6px;top:157.3px" width="9.3" height="9.3" viewBox="0 0 15.4 15.4"><path d="M0 0 H13.9 L6.5 15.4 H0 Z" fill="#0f5a9e"/><path d="M15.4 3.7 V10 H12.2 Z" fill="#1a3a60"/><path d="M10.5 12.2 H15.4 V15.4 H9 Z" fill="#1a3a60"/></svg>
<div class="a" style="left:17.3px;top:157px;font-size:2.9px;line-height:3.3px;color:#444;font-weight:bold;white-space:pre-line;filter:blur(0.25px)"><span style="color:#999;font-weight:normal">KONRAD</span>
ADENAUER
STIFTUNG</div>
<div class="a" style="left:224px;top:178.5px;width:2px;height:2px;border-radius:50%;background:#6ab0c4"></div>
</div>
<div class="a" style="left:15.5px;top:203.5px;width:255px;height:192px;border:2px solid #c9553f;background:#fff"></div>
<div class="a" style="left:18px;top:206px;width:249.5px;height:187px;overflow:hidden"><div class="a" style="left:0;top:0;width:418px;height:313.5px;transform:scale(0.5969);transform-origin:0 0;filter:blur(0.4px)">
<div class="a" style="left:0;top:0;width:418px;height:313.5px;background:#fff"></div>
<div class="a" style="left:0;top:288px;width:418px;height:25.5px;background:#04667f"></div>
<div class="a" style="left:284.8px;top:17.80000000000001px;font-family:'Liberation Serif',serif;font-size:8.2px;line-height:10px;color:#3f7080;-webkit-text-stroke:0.2px #3f7080"><u class="sq">mr.</u> sc. <u class="sq">Enita</u> ČUSTOVIĆ</div>
<svg style="left:376.0px;top:2.1px" width="39.6" height="39.6" viewBox="-20 -20 40 40"><circle r="20" fill="#0e6878"/><circle r="15.1" fill="#f1fbfd"/><path d="M-9.8 -6.6 L0 -12 L9.8 -6.6 Z" fill="#2b7a8a"/><rect x="-9" y="-6.7" width="18" height="1.7" fill="#2b7a8a"/><g fill="#2f7f90"><rect x="-7" y="-5" width="2" height="10.4"/><rect x="-4" y="-5" width="2" height="10.4"/><rect x="-1" y="-5" width="2" height="10.4"/><rect x="2" y="-5" width="2" height="10.4"/><rect x="5" y="-5" width="2" height="10.4"/></g><path d="M-14.2 5.2 H14.2 L11 10.6 H-11 Z" fill="#0e6878"/><rect x="-18.6" y="5.3" width="37.2" height="1.25" fill="#cdeff5"/><rect x="-17.4" y="8.7" width="34.8" height="1.25" fill="#cdeff5"/><path d="M-8 11.2 Q-3 10.6 0 13.6 Q3 10.6 8 11.2" fill="none" stroke="#0e6878" stroke-width="1.2"/><circle cx="0" cy="7.6" r="1.1" fill="#e4f6fa"/></svg>
<div class="a" style="left:45.8px;top:33.5px;font-family:'Liberation Serif',serif;font-size:18px;line-height:20px;color:#1a1a1a;text-decoration:underline;text-decoration-thickness:1.2px;text-underline-offset:2px">Malo brojeva u vezi sa komunikacijom:</div>
<div class="a" style="left:141.0px;top:52.4px;font-family:'Liberation Serif',serif;font-size:17.9px;line-height:20px;color:#86c440;text-decoration:underline;text-decoration-thickness:1.1px;text-underline-offset:2px">Jeste li znali?</div>
<div class="a" style="left:34.7px;top:83.8px;font-family:'Liberation Serif',serif;font-size:16.3px;line-height:18px;color:#333">utisak o nekoj osobi stiče se u prvih sedam sekundi!</div>
<div class="a" style="left:34.7px;top:106.5px;font-family:'Liberation Serif',serif;font-size:16.3px;line-height:18px;color:#333">od onoga <b>ŠTA</b> kažemo znatno je važnije <b>KAKO to</b></div>
<div class="a" style="left:34.7px;top:124.5px;font-family:'Liberation Serif',serif;font-size:16.3px;line-height:18px;color:#333"><b>činimo</b> i <b>KAKO izgledamo</b> dok govorimo, tako:</div>
<div class="a" style="left:36.3px;top:176.5px;font-family:'DejaVu Sans',sans-serif;font-weight:bold;font-size:13.3px;line-height:16px;color:#4a86d6;-webkit-text-stroke:0.45px #4a86d6">7% WHAT</div>
<div class="a" style="left:36.3px;top:199.3px;font-family:'DejaVu Sans',sans-serif;font-weight:bold;font-size:13.3px;line-height:16px;color:#4a86d6;-webkit-text-stroke:0.45px #4a86d6">38% HOW YOU SPEAK</div>
<div class="a" style="left:36.3px;top:222.5px;font-family:'DejaVu Sans',sans-serif;font-weight:bold;font-size:13.3px;line-height:16px;color:#4a86d6;-webkit-text-stroke:0.45px #4a86d6">55% HOW YOU LOOK?</div>
<svg style="left:0;top:0" width="418" height="313" viewBox="0 0 418 313"><path d="M305 202.10000000000002 L270.91 173.50 A44.5 44.5 0 1 1 328.58 239.84 Z" fill="#17a4ef"/><path d="M305 202.10000000000002 L328.58 239.84 A44.5 44.5 0 0 1 262.02 190.58 Z" fill="#7acb10"/><path d="M305 202.10000000000002 L262.02 190.58 A44.5 44.5 0 0 1 270.91 173.50 Z" fill="#f5831f"/><g font-family="DejaVu Sans, sans-serif" font-weight="bold" fill="#fff" text-anchor="middle"><text x="279.9" y="192.6" font-size="12.5">7%</text><text x="325.2" y="199.5" font-size="12.5">55%</text><text x="294.8" y="225.7" font-size="12.5">38%</text></g><g font-family="DejaVu Serif, serif" font-weight="bold" stroke-width="0.35"><text x="214.6" y="190.6" font-size="13" fill="#f5831f" stroke="#f5831f">words</text><text x="210.2" y="224.2" font-size="12.7" fill="#7acb10" stroke="#7acb10">speech</text><text x="352.0" y="198.0" font-size="13.1" fill="#17a4ef" stroke="#17a4ef">visual</text></g></svg>
<svg style="left:10.0px;top:260.7px" width="15.4" height="15.4" viewBox="0 0 15.4 15.4"><path d="M0 0 H13.9 L6.5 15.4 H0 Z" fill="#0f5a9e"/><path d="M15.4 3.7 V10 H12.2 Z" fill="#1a3a60"/><path d="M10.5 12.2 H15.4 V15.4 H9 Z" fill="#1a3a60"/></svg>
<div class="a" style="left:29.1px;top:260.6px;font-family:'Liberation Sans',sans-serif;line-height:5.8px;transform:scaleY(0.86);transform-origin:0 50%;font-size:5.54px;color:#8d8d8d">KONRAD</div>
<div class="a" style="left:29.1px;top:266.2px;font-family:'Liberation Sans',sans-serif;line-height:5.8px;transform:scaleY(0.86);transform-origin:0 50%;font-size:5.63px;color:#3a3a3a;font-weight:bold">ADENAUER</div>
<div class="a" style="left:29.1px;top:272.2px;font-family:'Liberation Sans',sans-serif;line-height:5.8px;transform:scaleY(0.86);transform-origin:0 50%;font-size:5.72px;color:#3a3a3a;font-weight:bold">STIFTUNG</div>
<div class="a" style="left:375.0px;top:300.5px;font-family:'Liberation Serif',serif;font-size:5.5px;line-height:7px;color:#bfe3ee">11</div>
</div></div>
<div class="a" style="left:18px;top:407px;width:249.5px;height:30px;background:#fff;box-shadow:0 0 0 0.6px #e2e2e2;overflow:hidden">
<svg style="left:225.2px;top:2.3px" width="22.8" height="22.8" viewBox="-20 -20 40 40"><circle r="20" fill="#0e6878"/><circle r="15.1" fill="#f1fbfd"/><path d="M-9.8 -6.6 L0 -12 L9.8 -6.6 Z" fill="#2b7a8a"/><rect x="-9" y="-6.7" width="18" height="1.7" fill="#2b7a8a"/><g fill="#2f7f90"><rect x="-7" y="-5" width="2" height="10.4"/><rect x="-4" y="-5" width="2" height="10.4"/><rect x="-1" y="-5" width="2" height="10.4"/><rect x="2" y="-5" width="2" height="10.4"/><rect x="5" y="-5" width="2" height="10.4"/></g><path d="M-14.2 5.2 H14.2 L11 10.6 H-11 Z" fill="#0e6878"/><rect x="-18.6" y="5.3" width="37.2" height="1.25" fill="#cdeff5"/><rect x="-17.4" y="8.7" width="34.8" height="1.25" fill="#cdeff5"/><path d="M-8 11.2 Q-3 10.6 0 13.6 Q3 10.6 8 11.2" fill="none" stroke="#0e6878" stroke-width="1.2"/><circle cx="0" cy="7.6" r="1.1" fill="#e4f6fa"/></svg>
</div>
</div>
<div class="a" style="left:286px;top:176px;width:624px;height:345px;background:#ebebeb"></div>
<div class="a" style="left:390px;top:192px;width:418px;height:313.5px;box-shadow:0 0 3px rgba(0,0,0,0.18)" id="slide">
<div class="a" style="left:0;top:0;width:418px;height:313.5px;background:#fff"></div>
<div class="a" style="left:0;top:288px;width:418px;height:25.5px;background:#04667f"></div>
<div class="a" style="left:284.8px;top:17.80000000000001px;font-family:'Liberation Serif',serif;font-size:8.2px;line-height:10px;color:#3f7080;-webkit-text-stroke:0.2px #3f7080"><u class="sq">mr.</u> sc. <u class="sq">Enita</u> ČUSTOVIĆ</div>
<svg style="left:376.0px;top:2.1px" width="39.6" height="39.6" viewBox="-20 -20 40 40"><circle r="20" fill="#0e6878"/><circle r="15.1" fill="#f1fbfd"/><path d="M-9.8 -6.6 L0 -12 L9.8 -6.6 Z" fill="#2b7a8a"/><rect x="-9" y="-6.7" width="18" height="1.7" fill="#2b7a8a"/><g fill="#2f7f90"><rect x="-7" y="-5" width="2" height="10.4"/><rect x="-4" y="-5" width="2" height="10.4"/><rect x="-1" y="-5" width="2" height="10.4"/><rect x="2" y="-5" width="2" height="10.4"/><rect x="5" y="-5" width="2" height="10.4"/></g><path d="M-14.2 5.2 H14.2 L11 10.6 H-11 Z" fill="#0e6878"/><rect x="-18.6" y="5.3" width="37.2" height="1.25" fill="#cdeff5"/><rect x="-17.4" y="8.7" width="34.8" height="1.25" fill="#cdeff5"/><path d="M-8 11.2 Q-3 10.6 0 13.6 Q3 10.6 8 11.2" fill="none" stroke="#0e6878" stroke-width="1.2"/><circle cx="0" cy="7.6" r="1.1" fill="#e4f6fa"/></svg>
<div class="a" style="left:45.8px;top:33.5px;font-family:'Liberation Serif',serif;font-size:18px;line-height:20px;color:#1a1a1a;text-decoration:underline;text-decoration-thickness:1.2px;text-underline-offset:2px">Malo brojeva u vezi sa komunikacijom:</div>
<div class="a" style="left:141.0px;top:52.4px;font-family:'Liberation Serif',serif;font-size:17.9px;line-height:20px;color:#86c440;text-decoration:underline;text-decoration-thickness:1.1px;text-underline-offset:2px">Jeste li znali?</div>
<div class="a" style="left:34.7px;top:83.8px;font-family:'Liberation Serif',serif;font-size:16.3px;line-height:18px;color:#333">utisak o nekoj osobi stiče se u prvih sedam sekundi!</div>
<div class="a" style="left:34.7px;top:106.5px;font-family:'Liberation Serif',serif;font-size:16.3px;line-height:18px;color:#333">od onoga <b>ŠTA</b> kažemo znatno je važnije <b>KAKO to</b></div>
<div class="a" style="left:34.7px;top:124.5px;font-family:'Liberation Serif',serif;font-size:16.3px;line-height:18px;color:#333"><b>činimo</b> i <b>KAKO izgledamo</b> dok govorimo, tako:</div>
<div class="a" style="left:36.3px;top:176.5px;font-family:'DejaVu Sans',sans-serif;font-weight:bold;font-size:13.3px;line-height:16px;color:#4a86d6;-webkit-text-stroke:0.45px #4a86d6">7% WHAT</div>
<div class="a" style="left:36.3px;top:199.3px;font-family:'DejaVu Sans',sans-serif;font-weight:bold;font-size:13.3px;line-height:16px;color:#4a86d6;-webkit-text-stroke:0.45px #4a86d6">38% HOW YOU SPEAK</div>
<div class="a" style="left:36.3px;top:222.5px;font-family:'DejaVu Sans',sans-serif;font-weight:bold;font-size:13.3px;line-height:16px;color:#4a86d6;-webkit-text-stroke:0.45px #4a86d6">55% HOW YOU LOOK?</div>
<svg style="left:0;top:0" width="418" height="313" viewBox="0 0 418 313"><path d="M305 202.10000000000002 L270.91 173.50 A44.5 44.5 0 1 1 328.58 239.84 Z" fill="#17a4ef"/><path d="M305 202.10000000000002 L328.58 239.84 A44.5 44.5 0 0 1 262.02 190.58 Z" fill="#7acb10"/><path d="M305 202.10000000000002 L262.02 190.58 A44.5 44.5 0 0 1 270.91 173.50 Z" fill="#f5831f"/><g font-family="DejaVu Sans, sans-serif" font-weight="bold" fill="#fff" text-anchor="middle"><text x="279.9" y="192.6" font-size="12.5">7%</text><text x="325.2" y="199.5" font-size="12.5">55%</text><text x="294.8" y="225.7" font-size="12.5">38%</text></g><g font-family="DejaVu Serif, serif" font-weight="bold" stroke-width="0.35"><text x="214.6" y="190.6" font-size="13" fill="#f5831f" stroke="#f5831f">words</text><text x="210.2" y="224.2" font-size="12.7" fill="#7acb10" stroke="#7acb10">speech</text><text x="352.0" y="198.0" font-size="13.1" fill="#17a4ef" stroke="#17a4ef">visual</text></g></svg>
<svg style="left:10.0px;top:260.7px" width="15.4" height="15.4" viewBox="0 0 15.4 15.4"><path d="M0 0 H13.9 L6.5 15.4 H0 Z" fill="#0f5a9e"/><path d="M15.4 3.7 V10 H12.2 Z" fill="#1a3a60"/><path d="M10.5 12.2 H15.4 V15.4 H9 Z" fill="#1a3a60"/></svg>
<div class="a" style="left:29.1px;top:260.6px;font-family:'Liberation Sans',sans-serif;line-height:5.8px;transform:scaleY(0.86);transform-origin:0 50%;font-size:5.54px;color:#8d8d8d">KONRAD</div>
<div class="a" style="left:29.1px;top:266.2px;font-family:'Liberation Sans',sans-serif;line-height:5.8px;transform:scaleY(0.86);transform-origin:0 50%;font-size:5.63px;color:#3a3a3a;font-weight:bold">ADENAUER</div>
<div class="a" style="left:29.1px;top:272.2px;font-family:'Liberation Sans',sans-serif;line-height:5.8px;transform:scaleY(0.86);transform-origin:0 50%;font-size:5.72px;color:#3a3a3a;font-weight:bold">STIFTUNG</div>
<div class="a" style="left:375.0px;top:300.5px;font-family:'Liberation Serif',serif;font-size:5.5px;line-height:7px;color:#bfe3ee">11</div>
</div>
<div class="a" style="left:286px;top:521px;width:624px;height:74px;background:#ededed;border-top:1px solid #dcdcdc"></div>
<div class="a" style="left:291px;top:528px;font-size:8.2px;line-height:10px;color:#111">Click to add notes</div>
<div class="a" style="left:1.5px;top:595px;width:908.5px;height:13px;background:#e3e3e3;border-top:1px solid #cfcfcf"></div>
<div class="a sb" id="sb1" style="left:15.6px">Slide 11 of 52</div>
<div class="a sb" id="sb2" style="left:75.6px">English (Bosnia and Herzegovina)</div>
<svg style="left:563px;top:598px" width="8" height="8" viewBox="0 0 8 8"><path d="M0.5 3.5 H7.5 M0.5 5.5 H7.5 M0.5 7.5 H5 M2.5 2 L4 0.5 L5.5 2" fill="none" stroke="#777" stroke-width="0.7"/></svg>
<div class="a sb" id="sb3" style="left:574.5px;color:#6a6a6a">Notes</div>
<svg style="left:608px;top:598px" width="8" height="8" viewBox="0 0 8 8"><path d="M0.5 0.8 H7.5 V5.6 H4 L2.3 7.4 V5.6 H0.5 Z" fill="#555"/></svg>
<div class="a sb" id="sb4" style="left:619px;color:#6a6a6a">Comments</div>
<div class="a" style="left:664.6px;top:596px;width:23px;height:12px;background:#cdcdcd"></div>
<svg style="left:671.5px;top:597.5px" width="9" height="9" viewBox="0 0 9 9"><rect x="0.5" y="0.5" width="8" height="8" fill="#f2f2f2" stroke="#999" stroke-width="0.6"/><path d="M2.5 3.5 H6.5 M2.5 5.5 H6.5" stroke="#999" stroke-width="0.6"/></svg>
<svg style="left:694.5px;top:598px" width="9" height="8" viewBox="0 0 9 8"><g fill="#555"><rect x="0" y="0.3" width="3.5" height="2.8"/><rect x="5" y="0.3" width="3.5" height="2.8"/><rect x="0" y="4.6" width="3.5" height="2.8"/><rect x="5" y="4.6" width="3.5" height="2.8"/></g></svg>
<svg style="left:716px;top:598px" width="10" height="8" viewBox="0 0 10 8"><rect x="0.4" y="0.4" width="9.2" height="7.2" fill="none" stroke="#777" stroke-width="0.7"/><path d="M5 0.4 V7.6 M1.5 2.5 H3.8 M1.5 4 H3.8 M6.2 2.5 H8.5 M6.2 4 H8.5" stroke="#777" stroke-width="0.6"/></svg>
<svg style="left:739.5px;top:598px" width="10" height="9" viewBox="0 0 10 9"><rect x="0.4" y="0.4" width="9.2" height="5.5" fill="none" stroke="#666" stroke-width="0.7"/><path d="M5 6 V8 M3 8.4 H7" stroke="#666" stroke-width="0.7"/></svg>
<div class="a" style="left:760.5px;top:601.8px;width:4px;height:1.2px;background:#555"></div>
<div class="a" style="left:771.6px;top:601.8px;width:61.5px;height:1.4px;background:#a8a8a8"></div>
<div class="a" style="left:796.4px;top:599.8px;width:5px;height:5px;border-radius:50%;background:#fff;box-shadow:0 0 1px #888"></div>
<div class="a" style="left:838.6px;top:601.8px;width:4.4px;height:1.2px;background:#555"></div><div class="a" style="left:840.2px;top:600.2px;width:1.2px;height:4.4px;background:#555"></div>
<div class="a sb" id="sb5" style="left:855.8px;color:#6a6a6a">93%</div>
<svg style="left:886.5px;top:598px" width="9" height="9" viewBox="0 0 9 9"><rect x="0.4" y="0.4" width="8.2" height="8.2" fill="none" stroke="#777" stroke-width="0.7"/><path d="M2 3.5 V2 H3.5 M5.5 2 H7 V3.5 M7 5.5 V7 H5.5 M3.5 7 H2 V5.5" fill="none" stroke="#777" stroke-width="0.7"/></svg>
<div class="a" style="left:915.5px;top:334px;width:3px;height:30px;background:#e8e8e8;border-radius:1.5px"></div>
<!-- ============ VIDEO ============ -->
<div class="a" style="left:936px;top:301px;width:172px;height:97px;overflow:hidden;background:#8a7a62">
<svg style="left:0;top:0" width="172" height="97" viewBox="0 0 172 97">
<defs><filter id="vb" x="-5%" y="-5%" width="110%" height="110%"><feGaussianBlur stdDeviation="0.9"/></filter>
<linearGradient id="wall" x1="0" y1="0" x2="0" y2="1"><stop offset="0" stop-color="#d9c03a"/><stop offset="0.6" stop-color="#c7ab33"/><stop offset="1" stop-color="#a08a30"/></linearGradient>
<linearGradient id="hair" x1="0" y1="0" x2="1" y2="0"><stop offset="0" stop-color="#cdbb90"/><stop offset="0.5" stop-color="#dccb9f"/><stop offset="1" stop-color="#ab9468"/></linearGradient></defs>
<g filter="url(#vb)">
<rect x="-4" y="-4" width="180" height="105" fill="#a38d6a"/>
<!-- wall -->
<path d="M-4 -4 H16 L21 42 V101 H-4 Z" fill="url(#wall)"/>
<!-- top row -->
<rect x="15" y="-2" width="160" height="19" fill="#bfa57c"/>
<rect x="16" y="1" width="21" height="15" fill="#5c6a58"/><rect x="20" y="5" width="12" height="8" fill="#7d8f7c"/>
<rect x="38.5" y="0" width="6" height="16" fill="#e6d9c3"/><rect x="44.5" y="0" width="3" height="16" fill="#c9a98c"/><rect x="47.5" y="1" width="7" height="15" fill="#3f4170"/><rect x="54.5" y="0" width="4" height="16" fill="#e8dcc8"/>
<rect x="58.5" y="0" width="5" height="16" fill="#d28a55"/><rect x="63.5" y="0" width="5" height="16" fill="#4d7fb0"/><rect x="68.5" y="0" width="11" height="16" fill="#e4d8be"/><rect x="79.5" y="0" width="6" height="16" fill="#d9c5a2"/>
<rect x="85.5" y="0" width="9" height="16" fill="#7a5a3c"/>
<rect x="94.5" y="0" width="6" height="16" fill="#ded2ba"/><rect x="100.5" y="0" width="4" height="16" fill="#f0ece2"/><rect x="104.5" y="0" width="4" height="16" fill="#9bb0c8"/><rect x="108.5" y="0" width="5" height="16" fill="#e2d6c0"/>
<rect x="113.5" y="0" width="4" height="16" fill="#7b3640"/><rect x="117.5" y="0" width="4" height="16" fill="#c4525e"/>
<rect x="121.5" y="0" width="6" height="16" fill="#8e8672"/><rect x="127.5" y="0" width="8" height="16" fill="#e0d4ba"/><rect x="135.5" y="0" width="9" height="16" fill="#cdbb98"/>
<rect x="144.5" y="0.5" width="28" height="9" fill="#e9e6d2"/>
<!-- board 1 -->
<rect x="15" y="16.5" width="160" height="3.8" fill="#b89868"/>
<!-- second row bg -->
<rect x="11" y="20" width="164" height="17" fill="#8c7552"/>
<rect x="11" y="22" width="6" height="15" fill="#dcd0b8"/><rect x="17" y="23" width="5" height="14" fill="#bdb39c"/><rect x="22.5" y="21.5" width="6" height="15.5" fill="#e6dcc6"/><rect x="28.5" y="22" width="5" height="15" fill="#d0c6ae"/><rect x="33.5" y="23" width="4" height="14" fill="#a9a08c"/><rect x="37.5" y="24" width="5" height="13" fill="#8e8a78"/>
<rect x="43" y="20.5" width="21" height="4.2" fill="#e2d8c2"/><rect x="43.5" y="24.7" width="20.5" height="6" fill="#5e4d36"/><rect x="43" y="30.7" width="21" height="3.4" fill="#dccdb0"/><rect x="42" y="34.1" width="22" height="3" fill="#b8a585"/>
<rect x="64.5" y="20.5" width="7.5" height="16.5" fill="#e9dfcb"/><rect x="72" y="21" width="4" height="16" fill="#d9c8b0"/>
<rect x="107" y="24" width="6" height="13" fill="#c9b898"/><rect x="113" y="25" width="6" height="12" fill="#b39f7c"/><rect x="119" y="23" width="6" height="14" fill="#d1c1a0"/>
<rect x="125.5" y="17" width="3" height="21" fill="#b89868"/>
<rect x="129" y="20" width="46" height="17" fill="#b7ac8a"/>
<rect x="130" y="22" width="10" height="15" fill="#a3ac8c"/><rect x="140" y="24" width="8" height="12" fill="#c2c6ae"/><rect x="146" y="22" width="22" height="11" fill="#d5d0bc"/><rect x="151" y="30.5" width="20" height="4.8" fill="#4d463c"/><rect x="167" y="21" width="5" height="12" fill="#9aa88a"/>
<!-- board 2 -->
<rect x="10" y="36.6" width="165" height="5.6" fill="#bd9f70"/>
<rect x="20" y="42.2" width="155" height="4.4" fill="#8a6c4a"/>
<!-- lower-left shelves -->
<rect x="20.5" y="46" width="27" height="52" fill="#4b3b2e"/>
<rect x="22" y="49" width="22" height="13" fill="#6a5a50"/><rect x="24" y="51" width="16" height="9" fill="#55473d"/>
<rect x="22" y="65" width="22" height="2.2" fill="#6b553d"/>
<rect x="22" y="69" width="20" height="12" fill="#7c6c5c"/><rect x="23" y="70" width="5" height="11" fill="#a89a88"/><rect x="29" y="70" width="4" height="11" fill="#8d7f70"/><rect x="34" y="71" width="6" height="10" fill="#9c8e7c"/>
<!-- right of person dark -->
<rect x="103" y="44" width="17" height="28" fill="#2a3048"/>
<rect x="106" y="46" width="3" height="22" fill="#4a4f68"/><rect x="111" y="47" width="3" height="21" fill="#6a5560"/>
<!-- right lower light -->
<rect x="118.5" y="44" width="56" height="22" fill="#d8d3da"/>
<rect x="120.5" y="48" width="4" height="17" fill="#d0bfa8"/><rect x="124.5" y="49" width="4" height="16" fill="#e5d8c6"/><rect x="128.5" y="48.5" width="4" height="16.5" fill="#c8a9a0"/><rect x="132.5" y="50" width="4" height="15" fill="#dccfbc"/><rect x="136.5" y="50" width="4" height="15" fill="#bfb09c"/>
<rect x="140.5" y="55" width="26" height="9" fill="#f0eeea"/><rect x="166" y="50" width="5" height="14" fill="#b8c4a8"/>
<rect x="119" y="65" width="56" height="2.4" fill="#b8ab9c"/>
<rect x="119" y="67.2" width="56" height="31" fill="#d3d9e4"/>
<ellipse cx="133" cy="75" rx="5" ry="2.4" fill="#7fa3ae"/>
<rect x="128" y="82" width="10" height="7" fill="#e8ecf0"/>
<rect x="146" y="81" width="25" height="5.5" rx="2" fill="#6f7880"/>
<rect x="119" y="90" width="56" height="8" fill="#e6e8ec"/>
<!-- chair -->
<path d="M45.5 98 V60 Q46.5 48.5 57 48 L76 48 V98 Z" fill="#101216"/>
<!-- suit -->
<path d="M47 98 Q52 72 76 64.5 L104 64.5 Q124 70 132 98 Z" fill="#1a2238"/>
<!-- shirt -->
<path d="M77.5 63 L104 63 L104 98 L80 98 Z" fill="#eeeceb"/>
<path d="M76 64 L88 98 L66 98 Q68 76 76 64 Z" fill="#1a2238"/>
<path d="M105 64 L103 98 L122 98 Q116 74 105 64 Z" fill="#1d2740"/>
<!-- tie -->
<path d="M87.5 80 L98 79 L101 98 L85 98 Z" fill="#6b7282"/>
<path d="M88 80 L98 79 L96 86 L90 86 Z" fill="#8c93a0"/>
<!-- hair -->
<path d="M73 62 Q68 24 84 15 Q96 11 104 18 Q111 30 108 48 Q106 58 104 63 L98 48 L80 48 L77 63 Z" fill="url(#hair)"/>
<!-- neck -->
<path d="M82 56 L99 56 L98 66 L90 70 L83 66 Z" fill="#c89880"/>
<!-- face -->
<ellipse cx="90" cy="41" rx="12.5" ry="19" fill="#d2a38b"/><path d="M78 36 Q77 52 86 59 Q81 48 82 34 Z" fill="#b98a74"/>
<path d="M77.5 38 Q79 22 90 20 Q101 21 103 38 Q97 25 90 25 Q82 26 77.5 38 Z" fill="#d8c59c"/>
<path d="M90 14 L91 26 L89 26 Z" fill="#b39c72"/>
<ellipse cx="84" cy="37.5" rx="3.2" ry="1.3" fill="#6e4f44"/><ellipse cx="96.5" cy="37.5" rx="3.2" ry="1.3" fill="#6e4f44"/>
<ellipse cx="90" cy="45" rx="2" ry="3" fill="#cf9c86"/>
<ellipse cx="88.5" cy="54" rx="4.6" ry="2.4" fill="#b8382f"/>
<rect x="-4" y="-4" width="180" height="105" fill="#3a2c1c" opacity="0.13"/>
</g>
<linearGradient id="nl" x1="0" y1="0" x2="1" y2="0"><stop offset="0" stop-color="rgba(25,22,18,0.6)"/><stop offset="1" stop-color="rgba(25,22,18,0.45)"/></linearGradient>
<rect x="0" y="80.5" width="61" height="16.5" fill="url(#nl)"/>
</svg>
<div class="a" id="vname" style="left:2px;top:83px;font-size:9.04px;line-height:12px;color:#fff">Enita Čustović</div>
</div>
<!-- ============ TASKBAR ============ -->
<div id="taskbar" class="a"></div>
<div id="under" class="a"></div>
<div class="a" style="left:15px;top:712.5px;width:14px;height:14px;border-radius:50%;background:radial-gradient(circle at 40% 35%,#ffd84a 0%,#fdb913 60%,#f59a0e 100%)"></div>
<div class="a tb" style="left:37px;top:708px;line-height:12px;font-size:8.45px">-2°C</div>
<div class="a tb" style="left:37px;top:720px;line-height:12px;font-size:8.45px;color:#e8e8f0">Sunny</div>
<!-- windows -->
<svg style="left:437px;top:711px" width="17" height="17" viewBox="0 0 17 17"><defs><linearGradient id="wg" x1="0" y1="0" x2="1" y2="1"><stop offset="0" stop-color="#6fd3fb"/><stop offset="1" stop-color="#1c9cf0"/></linearGradient></defs><rect x="0" y="0" width="8" height="8" fill="url(#wg)"/><rect x="9" y="0" width="8" height="8" fill="url(#wg)"/><rect x="0" y="9" width="8" height="8" fill="url(#wg)"/><rect x="9" y="9" width="8" height="8" fill="url(#wg)"/></svg>
<!-- search -->
<svg style="left:468px;top:710px" width="19" height="19" viewBox="0 0 19 19"><circle cx="11" cy="7.5" r="5.6" fill="#3b4464" stroke="#f2f2f2" stroke-width="1.8"/><path d="M6.8 11.8 L2 17" stroke="#f2f2f2" stroke-width="2.2" stroke-linecap="round"/></svg>
<!-- task view -->
<svg style="left:500px;top:710px" width="20" height="19" viewBox="0 0 20 19"><rect x="6" y="2" width="13" height="11" fill="#f3f3f3"/><rect x="1" y="6" width="13" height="11" fill="#8c8c8c" opacity="0.95"/></svg>
<!-- teams chat -->
<svg style="left:533px;top:710px" width="19" height="19" viewBox="0 0 19 19"><path d="M9.5 1.2 A8 8 0 1 1 4.5 15.5 L1.5 17.5 L2.5 13.5 A8 8 0 0 1 9.5 1.2 Z" fill="#7b72d6"/><rect x="5" y="6.5" width="6.5" height="6" rx="1.2" fill="#fff"/><path d="M12 9 L14.5 7.2 V12 L12 10.2 Z" fill="#fff"/></svg>
<!-- edge -->
<svg style="left:565px;top:710px" width="19" height="19" viewBox="0 0 19 19"><defs><linearGradient id="eg" x1="0" y1="0" x2="1" y2="1"><stop offset="0" stop-color="#35c1f1"/><stop offset="0.55" stop-color="#1b7fd6"/><stop offset="1" stop-color="#2fc36a"/></linearGradient></defs><circle cx="9.5" cy="9.5" r="8.6" fill="url(#eg)"/><path d="M5 11.5 C5 8 8 6 11 6.6 C14 7.2 15 9.5 14 11 C13 12.2 11 12 10.5 11 C10.2 10.2 10.8 9.4 10.2 9 C8.5 8.4 7.2 10.2 7.6 12.2 C8 14.5 10.5 16 13.5 15.2 C10 18.5 4.8 16 5 11.5 Z" fill="#0c4a93" opacity="0.85"/></svg>
<!-- explorer -->
<svg style="left:597px;top:711px" width="20" height="18" viewBox="0 0 20 18"><path d="M1 2.5 A1 1 0 0 1 2 1.5 H7 L9 3.5 H18 A1 1 0 0 1 19 4.5 V6 H1 Z" fill="#e5a400"/><rect x="1" y="4.8" width="18" height="11.7" rx="1" fill="#ffd24a"/><rect x="5.5" y="11" width="9" height="5.5" fill="#2a8be6"/><rect x="7.5" y="11" width="5" height="1.6" fill="#ffd24a"/></svg>
<!-- mail -->
<svg style="left:629px;top:711px" width="20" height="17" viewBox="0 0 20 17"><path d="M1.5 6.5 L10 0.8 L18.5 6.5 V15.5 H1.5 Z" fill="#1a7bd0"/><path d="M1.5 7 L10 12.5 L18.5 7 V15.8 H1.5 Z" fill="#39a5f0"/><path d="M3 6.8 H17 L10 11.5 Z" fill="#eaf5ff"/></svg>
<!-- chrome -->
<div class="a" style="left:657px;top:704px;width:29px;height:31px;background:#222f57;border-radius:4px"></div>
<svg style="left:662px;top:710px" width="19" height="19" viewBox="0 0 19 19"><circle cx="9.5" cy="9.5" r="8.6" fill="#e74335"/><path d="M9.5 9.5 L2.05 5.2 A8.6 8.6 0 0 0 9.5 18.1 L13.2 11.6 Z" fill="#30a952"/><path d="M9.5 9.5 L13.8 17 A8.6 8.6 0 0 0 16.95 5.2 H9.5 Z" fill="#fbbc05"/><circle cx="9.5" cy="9.5" r="4" fill="#fff"/><circle cx="9.5" cy="9.5" r="3.1" fill="#4286f5"/></svg>
<div class="a" style="left:666px;top:732px;width:11px;height:2px;background:#55b7f3;border-radius:1px"></div>
<!-- skype -->
<svg style="left:694px;top:710px" width="19" height="19" viewBox="0 0 19 19"><circle cx="6.5" cy="6.5" r="5.5" fill="#19b5ef"/><circle cx="12.5" cy="12.5" r="5.5" fill="#19b5ef"/><circle cx="9.5" cy="9.5" r="7.3" fill="#19b5ef"/><circle cx="9.5" cy="9.5" r="6" fill="#fff" opacity="0.0"/><text x="9.5" y="13.6" text-anchor="middle" font-family="Liberation Sans, sans-serif" font-weight="bold" font-size="11.5" fill="#fff">S</text></svg>
<!-- onenote -->
<svg style="left:726px;top:711px" width="20" height="17" viewBox="0 0 20 17"><rect x="5" y="0.5" width="14" height="16" rx="1.2" fill="#c05fd8"/><rect x="12" y="0.5" width="7" height="5.3" fill="#d98aec"/><rect x="12" y="5.8" width="7" height="5.3" fill="#b04acb"/><rect x="12" y="11.1" width="7" height="5.4" fill="#8d2fa8"/><rect x="0.5" y="3.5" width="10" height="10" rx="1" fill="#7a1fa2"/><text x="5.5" y="11.7" text-anchor="middle" font-family="Liberation Sans, sans-serif" font-weight="bold" font-size="8.5" fill="#fff">N</text></svg>
<!-- calendar -->
<svg style="left:759px;top:710px" width="19" height="19" viewBox="0 0 19 19"><rect x="1" y="2.5" width="17" height="15.5" rx="1.5" fill="#2c8fe6"/><rect x="1" y="2.5" width="17" height="4" fill="#1565c0"/><rect x="5" y="0.8" width="1.6" height="3.4" fill="#bfe0ff"/><rect x="12.4" y="0.8" width="1.6" height="3.4" fill="#bfe0ff"/><g fill="#eaf4ff"><rect x="3.5" y="8.5" width="2" height="2"/><rect x="6.8" y="8.5" width="2" height="2"/><rect x="10.1" y="8.5" width="2" height="2"/><rect x="13.4" y="8.5" width="2" height="2"/><rect x="3.5" y="11.6" width="2" height="2"/><rect x="6.8" y="11.6" width="2" height="2"/><rect x="10.1" y="11.6" width="2" height="2"/><rect x="13.4" y="11.6" width="2" height="2"/><rect x="3.5" y="14.7" width="2" height="2"/><rect x="6.8" y="14.7" width="2" height="2"/><rect x="10.1" y="14.7" width="2" height="2"/></g></svg>
<!-- calculator -->
<svg style="left:793px;top:710px" width="15" height="19" viewBox="0 0 15 19"><rect x="0.5" y="0.5" width="14" height="18" rx="1" fill="#6e7076"/><rect x="1.8" y="1.8" width="11.4" height="3.6" fill="#5ec8c0"/><g fill="#e6e6e6"><rect x="1.8" y="6.6" width="3.2" height="3.2"/><rect x="5.9" y="6.6" width="3.2" height="3.2"/><rect x="10" y="6.6" width="3.2" height="3.2"/><rect x="1.8" y="10.6" width="3.2" height="3.2"/><rect x="5.9" y="10.6" width="3.2" height="3.2"/><rect x="1.8" y="14.6" width="3.2" height="3.2"/><rect x="5.9" y="14.6" width="3.2" height="3.2"/></g><rect x="10" y="10.6" width="3.2" height="7.2" fill="#2b6fd6"/></svg>
<!-- outlook -->
<svg style="left:823px;top:711px" width="20" height="17" viewBox="0 0 20 17"><rect x="6" y="0.5" width="13" height="16" rx="1.2" fill="#1e88e5"/><rect x="12.5" y="0.5" width="6.5" height="5.3" fill="#5cc0f7"/><rect x="12.5" y="5.8" width="6.5" height="5.3" fill="#2d9bf0"/><rect x="6" y="11" width="13" height="5.5" fill="#1464b4"/><rect x="0.5" y="3.5" width="10" height="10" rx="1" fill="#0f6fc5"/><text x="5.5" y="11.7" text-anchor="middle" font-family="Liberation Sans, sans-serif" font-weight="bold" font-size="8.5" fill="#fff">O</text></svg>
<!-- powerpoint -->
<svg style="left:855px;top:710px" width="20" height="19" viewBox="0 0 20 19"><circle cx="11.5" cy="9.5" r="8" fill="#ed6c47"/><path d="M11.5 1.5 A8 8 0 0 1 19.5 9.5 H11.5 Z" fill="#ff8f6b"/><path d="M3.5 9.5 H19.5 A8 8 0 0 1 3.5 9.5 Z" fill="#d35230"/><rect x="0.5" y="4.5" width="10" height="10" rx="1" fill="#c43e1c"/><text x="5.5" y="12.7" text-anchor="middle" font-family="Liberation Sans, sans-serif" font-weight="bold" font-size="8.5" fill="#fff">P</text></svg>
<!-- publisher -->
<svg style="left:887px;top:711px" width="20" height="17" viewBox="0 0 20 17"><rect x="5" y="0.5" width="14" height="16" rx="1.2" fill="#16a085"/><rect x="5" y="0.5" width="14" height="5.3" fill="#39c5ab"/><rect x="5" y="11" width="14" height="5.5" fill="#0e7a66"/><rect x="0.5" y="3.5" width="10" height="10" rx="1" fill="#0b7466"/><text x="5.5" y="11.7" text-anchor="middle" font-family="Liberation Sans, sans-serif" font-weight="bold" font-size="8.5" fill="#fff">P</text></svg>
<!-- word -->
<svg style="left:919px;top:711px" width="20" height="17" viewBox="0 0 20 17"><rect x="5" y="0.5" width="14" height="16" rx="1.2" fill="#2b7cd3"/><rect x="5" y="0.5" width="14" height="4" fill="#41a5ee"/><rect x="5" y="8.5" width="14" height="4" fill="#185abd"/><rect x="5" y="12.5" width="14" height="4" fill="#103f91"/><rect x="0.5" y="3.5" width="10" height="10" rx="1" fill="#185abd"/><text x="5.5" y="11.7" text-anchor="middle" font-family="Liberation Sans, sans-serif" font-weight="bold" font-size="8" fill="#fff">W</text></svg>
<!-- excel -->
<svg style="left:951px;top:711px" width="20" height="17" viewBox="0 0 20 17"><rect x="5" y="0.5" width="14" height="16" rx="1.2" fill="#21a366"/><rect x="12" y="0.5" width="7" height="5.3" fill="#33c481"/><rect x="5" y="5.8" width="7" height="5.3" fill="#107c41"/><rect x="5" y="11" width="14" height="5.5" fill="#185c37"/><rect x="0.5" y="3.5" width="10" height="10" rx="1" fill="#107c41"/><text x="5.5" y="11.7" text-anchor="middle" font-family="Liberation Sans, sans-serif" font-weight="bold" font-size="8.5" fill="#fff">X</text></svg>
<!-- running dots -->
<div class="a" style="left:605px;top:732px;width:4px;height:2px;background:#9aa0b0;border-radius:1px"></div>
<div class="a" style="left:863px;top:732px;width:4px;height:2px;background:#9aa0b0;border-radius:1px"></div>
<div class="a" style="left:927px;top:732px;width:4px;height:2px;background:#9aa0b0;border-radius:1px"></div>
<div class="a" style="left:959px;top:732px;width:4px;height:2px;background:#9aa0b0;border-radius:1px"></div>
<!-- tray -->
<svg style="left:1220px;top:716px" width="11" height="7" viewBox="0 0 11 7"><path d="M1 6 L5.5 1.5 L10 6" fill="none" stroke="#e6e6e6" stroke-width="1.3"/></svg>
<svg style="left:1240px;top:712px" width="11" height="15" viewBox="0 0 11 15"><rect x="3.3" y="1" width="4.4" height="8" rx="2.2" fill="none" stroke="#cfd6e6" stroke-width="1"/><path d="M1.3 7 A4.2 4.2 0 0 0 9.7 7" fill="none" stroke="#4db5ef" stroke-width="1"/><path d="M5.5 11.3 V13.6" stroke="#4db5ef" stroke-width="1"/></svg>
<div class="a tb" style="left:1265px;top:714px;font-size:8.4px;line-height:12px;letter-spacing:-0.3px">BOS</div>
<svg style="left:1294px;top:712px" width="14" height="15" viewBox="0 0 14 15"><rect x="1" y="2.5" width="9.5" height="8" rx="0.8" fill="none" stroke="#e6e6e6" stroke-width="1"/><path d="M4 13 H11 M10.5 6 V13" stroke="#e6e6e6" stroke-width="1"/><circle cx="10.8" cy="3" r="1.7" fill="#14234d" stroke="#e6e6e6" stroke-width="0.9"/></svg>
<svg style="left:1312px;top:713px" width="14" height="13" viewBox="0 0 14 13"><path d="M1 4.7 H3.2 L6.2 2 V11 L3.2 8.3 H1 Z" fill="none" stroke="#e6e6e6" stroke-width="0.9"/><path d="M8 4.5 Q9.3 6.5 8 8.5 M9.8 3.2 Q12 6.5 9.8 9.8 M11.6 2 Q14.5 6.5 11.6 11" fill="none" stroke="#e6e6e6" stroke-width="0.8"/></svg>
<div class="a tb" style="left:1300px;width:75px;text-align:right;top:708px;font-size:8.3px;line-height:12px">10:53 AM</div>
<div class="a tb" style="left:1300px;width:75px;text-align:right;top:719.5px;font-size:8.7px;line-height:12px">3/12/2022</div>
<div class="a" style="left:1380.5px;top:713.5px;width:12px;height:12px;border-radius:50%;background:#39b4ee;color:#0f2a55;font-size:8.6px;text-align:center;line-height:12.4px">6</div>
</div>
</body>
</html>
